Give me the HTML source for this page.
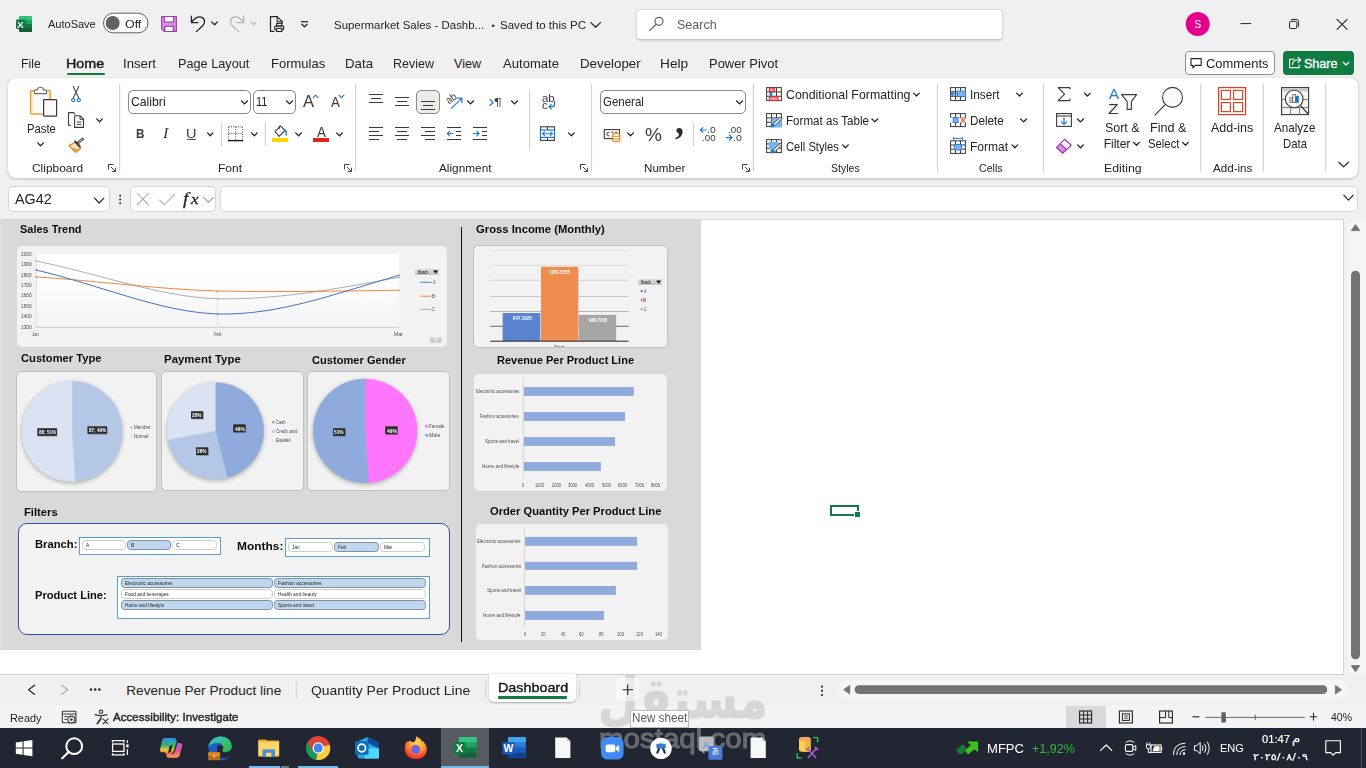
<!DOCTYPE html>
<html lang="en">
<head>
<meta charset="utf-8">
<title>Supermarket Sales - Dashboard - Excel</title>
<style>
*{box-sizing:border-box;margin:0;padding:0}
html,body{width:1366px;height:768px;overflow:hidden;background:#f0f0f0;font-family:"Liberation Sans",sans-serif;color:#242424}
.a{position:absolute}
.t{position:absolute;white-space:nowrap;line-height:1;transform-origin:0 50%;display:block;z-index:2}
svg{position:absolute;overflow:visible}
</style>
</head>
<body>
<div class="a" style="left:0px;top:0px;width:1366px;height:78px;background:#f0f0f0"></div>
<span class="t" style="left:17.35px;top:21px;font-size:8.6px;color:#fff;font-weight:700;transform:scaleX(1.1717);">X</span>
<span class="t" style="left:48.3px;top:18px;font-size:11.7px;color:#242424;transform:scaleX(0.9413);">AutoSave</span>
<span class="t" style="left:125.14px;top:18px;font-size:11.7px;color:#242424;transform:scaleX(1.0592);">Off</span>
<span class="t" style="left:333.68px;top:19px;font-size:11.7px;color:#242424;transform:scaleX(0.9794);">Supermarket Sales - Dashb...</span>
<span class="t" style="left:491.58px;top:22px;font-size:9px;color:#242424;">•</span>
<span class="t" style="left:500.18px;top:19px;font-size:11.7px;color:#242424;transform:scaleX(0.9876);">Saved to this PC</span>
<div class="a" style="left:635.5px;top:8.5px;width:367px;height:31px;background:#fff;border:1px solid #dcdcdc;border-bottom-color:#c4c4c4;border-radius:4px;box-shadow:0 1px 2px rgba(0,0,0,.12)"></div>
<span class="t" style="left:676.74px;top:19px;font-size:12.7px;color:#616161;transform:scaleX(0.9855);">Search</span>
<span class="t" style="left:1194.45px;top:20px;font-size:10px;color:#fff;">S</span>
<span class="t" style="left:21.42px;top:58px;font-size:12.6px;color:#242424;transform:scaleX(0.9694);">File</span>
<span class="t" style="left:123.01px;top:58px;font-size:12.6px;color:#242424;transform:scaleX(1.0472);">Insert</span>
<span class="t" style="left:178.18px;top:58px;font-size:12.6px;color:#242424;transform:scaleX(1.0094);">Page Layout</span>
<span class="t" style="left:270.96px;top:58px;font-size:12.6px;color:#242424;transform:scaleX(1.0334);">Formulas</span>
<span class="t" style="left:344.94px;top:58px;font-size:12.6px;color:#242424;transform:scaleX(1.0530);">Data</span>
<span class="t" style="left:393px;top:58px;font-size:12.6px;color:#242424;transform:scaleX(0.9921);">Review</span>
<span class="t" style="left:454px;top:58px;font-size:12.6px;color:#242424;">View</span>
<span class="t" style="left:503px;top:58px;font-size:12.6px;color:#242424;transform:scaleX(1.0389);">Automate</span>
<span class="t" style="left:579.93px;top:58px;font-size:12.6px;color:#242424;transform:scaleX(1.0576);">Developer</span>
<span class="t" style="left:659.9px;top:58px;font-size:12.6px;color:#242424;transform:scaleX(1.0869);">Help</span>
<span class="t" style="left:708.96px;top:58px;font-size:12.6px;color:#242424;transform:scaleX(1.0270);">Power Pivot</span>
<span class="t" style="left:66.26px;top:58px;font-size:12.2px;color:#1a1a1a;transform:scaleX(1.1723);-webkit-text-stroke:.4px #1a1a1a;">Home</span>
<div class="a" style="left:66.8px;top:72.8px;width:38px;height:2.2px;background:#107c41;border-radius:1px"></div>
<div class="a" style="left:1185px;top:51px;width:90px;height:24px;background:#fff;border:1px solid #8f8f8f;border-radius:4px"></div>
<span class="t" style="left:1205.85px;top:58px;font-size:12.6px;color:#242424;transform:scaleX(1.0276);">Comments</span>
<div class="a" style="left:1283px;top:51px;width:71px;height:24px;background:#107c41;border-radius:4px"></div>
<span class="t" style="left:1303.93px;top:58px;font-size:12.6px;color:#fff;-webkit-text-stroke:.3px #fff;">Share</span>
<svg class="a" style="left:0;top:0" width="1366" height="768" viewBox="0 0 1366 768"><rect x="19" y="16" width="13" height="16" fill="#21a366" stroke="none" stroke-width="1" rx="1" />
<rect x="19" y="16" width="13" height="4" fill="#33c481" stroke="none" stroke-width="1" rx="1" />
<rect x="19" y="24" width="13" height="4" fill="#107c41" stroke="none" stroke-width="1" rx="0" />
<rect x="19" y="28" width="13" height="4" fill="#185c37" stroke="none" stroke-width="1" rx="1" />
<rect x="25.5" y="16" width="0.8" height="16" fill="#0e6b38" stroke="none" stroke-width="1" rx="0" opacity=".35"/>
<rect x="16" y="19.5" width="9.5" height="9.5" fill="#107c41" stroke="none" stroke-width="1" rx="1" />
<rect x="18.5" y="28" width="7" height="1.6" fill="#0b5a2e" stroke="none" stroke-width="1" rx="0" opacity=".6"/>
<rect x="103.5" y="13.2" width="44.5" height="19.6" fill="#fff" stroke="#616161" stroke-width="1" rx="9.8" />
<circle cx="112.7" cy="23" r="7" fill="#616161" stroke="none" stroke-width="1" />
<path d="M161.6 16.6H176.4V31.4H164.2L161.6 28.8Z" stroke="#9a3fae" fill="#d490de" stroke-width="1.1" stroke-linejoin="round"/>
<rect x="164.9" y="17.1" width="8.2" height="4.4" fill="#fff" stroke="none" stroke-width="1" rx="0" />
<rect x="165.8" y="26.8" width="6.6" height="4.2" fill="#fff" stroke="none" stroke-width="1" rx="0" />
<path d="M164.4 31.2V26.3H173.6V31.2M164.4 17V22H173.6V17" stroke="#9a3fae" fill="none" stroke-width="1" />
<path d="M191.4 16.2V22.6H197.8" stroke="#242424" fill="none" stroke-width="1.3" stroke-linecap="round" stroke-linejoin="round"/>
<path d="M191.8 22.2C194 18.4 198.6 15.4 202.4 17.6C205.4 19.4 205 23.4 202.6 25.8L196.4 31.6" stroke="#242424" fill="none" stroke-width="1.3" stroke-linecap="round" stroke-linejoin="round"/>
<path d="M211.7 21.9L214.55 24.8L217.4 21.9" stroke="#242424" stroke-width="1.3" fill="none" stroke-linecap="round" stroke-linejoin="round"/>
<path d="M243.6 16.2V22.6H237.2" stroke="#b4b4b4" fill="none" stroke-width="1.3" stroke-linecap="round" stroke-linejoin="round"/>
<path d="M243.2 22.2C241 18.4 236.4 15.4 232.6 17.6C229.6 19.4 230 23.4 232.4 25.8L238.6 31.6" stroke="#b4b4b4" fill="none" stroke-width="1.3" stroke-linecap="round" stroke-linejoin="round"/>
<path d="M250.9 21.9L253.6 24.8L256.3 21.9" stroke="#bdbdbd" stroke-width="1.3" fill="none" stroke-linecap="round" stroke-linejoin="round"/>
<path d="M274.4 31.4H270.5V16.6H277.2L282.4 21.8V23.6" stroke="#242424" fill="none" stroke-width="1.2" stroke-linejoin="round"/>
<path d="M277.2 16.8V21.8H282.2" stroke="#242424" fill="none" stroke-width="1.1" stroke-linejoin="round"/>
<rect x="274.8" y="26" width="8.8" height="3.8" fill="none" stroke="#242424" stroke-width="1.1" rx="0.6" />
<rect x="276.6" y="23.4" width="5.2" height="2.6" fill="none" stroke="#242424" stroke-width="1.1" rx="0" />
<rect x="276.6" y="28.4" width="5.2" height="3.1" fill="#f0f0f0" stroke="#242424" stroke-width="1.1" rx="0" />
<path d="M301 21.7L308 21.7" stroke="#242424" stroke-width="1.2" fill="none" />
<path d="M301.9 24.3L304.5 26.8L307.1 24.3" stroke="#242424" stroke-width="1.3" fill="none" stroke-linecap="round" stroke-linejoin="round"/>
<path d="M590.9 22.6L595.65 27.2L600.4 22.6" stroke="#242424" stroke-width="1.2" fill="none" stroke-linecap="round" stroke-linejoin="round"/>
<circle cx="659" cy="21.3" r="4" fill="none" stroke="#616161" stroke-width="1.2" />
<path d="M656.2 24.3L649.5 30.6" stroke="#616161" stroke-width="1.2" fill="none" stroke-linecap="round"/>
<circle cx="1197.7" cy="24" r="12" fill="#e3008c" stroke="none" stroke-width="1" />
<path d="M1240.5 23.6L1251.2 23.6" stroke="#242424" stroke-width="1" fill="none" />
<rect x="1289.5" y="21.3" width="7.3" height="7.3" fill="none" stroke="#242424" stroke-width="1" rx="1.6" />
<path d="M1291.6 19.4H1296.2Q1298.6 19.4 1298.6 21.8V26.6" stroke="#242424" fill="none" stroke-width="1" stroke-linecap="round"/>
<path d="M1336.8 19.2L1347.4 29.6M1347.4 19.2L1336.8 29.6" stroke="#242424" fill="none" stroke-width="1.1" />
<path d="M1191 58.6H1201.2V65.4H1195.2L1192.9 67.8V65.4H1191Z" stroke="#242424" fill="none" stroke-width="1.1" stroke-linejoin="round"/>
<path d="M1294.2 59.2H1289.6V67.6H1299.2V65" stroke="#fff" fill="none" stroke-width="1.1" stroke-linejoin="round" stroke-linecap="round"/>
<path d="M1292.4 64.6C1292.8 61.6 1294.8 60 1297.4 60H1300.4M1298 57.4L1300.7 60L1298 62.6" stroke="#fff" fill="none" stroke-width="1.1" stroke-linejoin="round" stroke-linecap="round"/>
<path d="M1343.2 62.2L1346 65L1348.8 62.2" stroke="#fff" stroke-width="1.3" fill="none" stroke-linecap="round" stroke-linejoin="round"/></svg>
<div class="a" style="left:8px;top:78px;width:1350px;height:100px;background:#fff;border-radius:8px;box-shadow:0 1px 3px rgba(0,0,0,.20),0 0 1px rgba(0,0,0,.10)"></div>
<span class="t" style="left:26.6px;top:124px;font-size:11.9px;color:#242424;transform:scaleX(0.9490);">Paste</span>
<span class="t" style="left:32.15px;top:162px;font-size:11.7px;color:#242424;transform:scaleX(1.0207);">Clipboard</span>
<div class="a" style="left:128.2px;top:90px;width:122.6px;height:24px;border:1px solid #8a8a8a;border-radius:5px;background:#fff"></div>
<span class="t" style="left:130.89px;top:96px;font-size:12.7px;color:#242424;transform:scaleX(0.9629);">Calibri</span>
<div class="a" style="left:253.4px;top:90px;width:42.6px;height:24px;border:1px solid #8a8a8a;border-radius:5px;background:#fff"></div>
<span class="t" style="left:256.08px;top:96px;font-size:12.7px;color:#242424;transform:scaleX(0.8605);">11</span>
<span class="t" style="left:303px;top:93px;font-size:17.2px;color:#3b3b3b;transform:scaleX(0.9617);">A</span>
<span class="t" style="left:330.6px;top:96px;font-size:13.8px;color:#3b3b3b;transform:scaleX(0.9589);">A</span>
<span class="t" style="left:136.14px;top:127px;font-size:13px;color:#3b3b3b;font-weight:700;transform:scaleX(0.9006);">B</span>
<span class="t" style="left:163.18px;top:126px;font-size:14.4px;color:#3b3b3b;font-style:italic;font-family:'Liberation Serif',serif;transform:scaleX(1.1330);">I</span>
<span class="t" style="left:186.31px;top:128px;font-size:12.6px;color:#3b3b3b;transform:scaleX(1.1557);">U</span>
<span class="t" style="left:316.9px;top:125px;font-size:14.2px;color:#3b3b3b;transform:scaleX(0.9531);">A</span>
<span class="t" style="left:217.79px;top:162px;font-size:11.7px;color:#242424;transform:scaleX(1.0283);">Font</span>
<div class="a" style="left:416.2px;top:90px;width:23.4px;height:24px;background:#ebebeb;border:1px solid #8a8a8a;border-radius:5px"></div>
<span class="t" style="left:444.6px;top:92.6px;font-size:10.6px;color:#3b3b3b;transform:rotate(-38deg) scaleX(.92);transform-origin:50% 50%">ab</span>
<span class="t" style="left:494.28px;top:98px;font-size:10.4px;color:#3b3b3b;transform:scaleX(1.4214);">¶</span>
<span class="t" style="left:541.94px;top:94px;font-size:10.4px;color:#3b3b3b;transform:scaleX(1.1016);">ab</span>
<span class="t" style="left:541.94px;top:101px;font-size:10.4px;color:#3b3b3b;transform:scaleX(1.1052);">c</span>
<span class="t" style="left:439.4px;top:162px;font-size:11.7px;color:#242424;transform:scaleX(1.0095);">Alignment</span>
<div class="a" style="left:600.2px;top:90px;width:145.4px;height:24px;border:1px solid #8a8a8a;border-radius:5px;background:#fff"></div>
<span class="t" style="left:602.93px;top:96px;font-size:12.7px;color:#242424;transform:scaleX(0.9051);">General</span>
<span class="t" style="left:644.53px;top:126px;font-size:18.6px;color:#3b3b3b;transform:scaleX(1.0228);">%</span>
<span class="t" style="left:675.34px;top:102px;font-size:38px;color:#2b2b2b;font-weight:700;font-family:'Liberation Serif',serif;transform:scaleX(0.9499);">,</span>
<span class="t" style="left:706.66px;top:126px;font-size:8.8px;color:#3b3b3b;transform:scaleX(1.1844);">.0</span>
<span class="t" style="left:701.72px;top:134px;font-size:8.8px;color:#3b3b3b;transform:scaleX(1.1139);">.00</span>
<span class="t" style="left:727.72px;top:126px;font-size:8.8px;color:#3b3b3b;transform:scaleX(1.1139);">.00</span>
<span class="t" style="left:732.66px;top:134px;font-size:8.8px;color:#3b3b3b;transform:scaleX(1.1844);">.0</span>
<span class="t" style="left:643.82px;top:162px;font-size:11.7px;color:#242424;transform:scaleX(0.9941);">Number</span>
<span class="t" style="left:785.88px;top:90px;font-size:11.9px;color:#242424;transform:scaleX(1.0405);">Conditional Formatting</span>
<span class="t" style="left:785.57px;top:116px;font-size:11.9px;color:#242424;transform:scaleX(0.9754);">Format as Table</span>
<span class="t" style="left:785.94px;top:142px;font-size:11.9px;color:#242424;transform:scaleX(0.9418);">Cell Styles</span>
<span class="t" style="left:831.03px;top:162px;font-size:11.7px;color:#242424;transform:scaleX(0.9016);">Styles</span>
<span class="t" style="left:969.54px;top:90px;font-size:11.9px;color:#242424;transform:scaleX(0.9903);">Insert</span>
<span class="t" style="left:969.66px;top:116px;font-size:11.9px;color:#242424;transform:scaleX(0.9860);">Delete</span>
<span class="t" style="left:969.64px;top:142px;font-size:11.9px;color:#242424;transform:scaleX(1.0133);">Format</span>
<span class="t" style="left:979.22px;top:162px;font-size:11.7px;color:#242424;transform:scaleX(0.9086);">Cells</span>
<span class="t" style="left:1108.8px;top:87px;font-size:14.6px;color:#1f7ad8;transform:scaleX(1.0300);">A</span>
<span class="t" style="left:1108.28px;top:102px;font-size:14.6px;color:#3b3b3b;transform:scaleX(1.1955);">Z</span>
<span class="t" style="left:1105.44px;top:123px;font-size:11.9px;color:#242424;transform:scaleX(1.0427);">Sort &amp;</span>
<span class="t" style="left:1103.8px;top:139px;font-size:11.9px;color:#242424;">Filter</span>
<span class="t" style="left:1150.49px;top:123px;font-size:11.9px;color:#242424;transform:scaleX(1.0624);">Find &amp;</span>
<span class="t" style="left:1147.59px;top:139px;font-size:11.9px;color:#242424;transform:scaleX(0.9511);">Select</span>
<span class="t" style="left:1103.77px;top:162px;font-size:11.7px;color:#242424;transform:scaleX(1.0512);">Editing</span>
<span class="t" style="left:1211.25px;top:123px;font-size:11.9px;color:#242424;transform:scaleX(1.0482);">Add-ins</span>
<span class="t" style="left:1212.5px;top:162px;font-size:11.7px;color:#242424;transform:scaleX(0.9935);">Add-ins</span>
<span class="t" style="left:1274.1px;top:123px;font-size:11.9px;color:#242424;transform:scaleX(0.9778);">Analyze</span>
<span class="t" style="left:1282.59px;top:139px;font-size:11.9px;color:#242424;transform:scaleX(0.9539);">Data</span>
<svg class="a" style="left:0;top:0" width="1366" height="768" viewBox="0 0 1366 768"><path d="M119.6 83.5L119.6 171.5" stroke="#d4d4d4" stroke-width="1.2" fill="none" />
<path d="M355.6 83.5L355.6 171.5" stroke="#d4d4d4" stroke-width="1.2" fill="none" />
<path d="M591.5 83.5L591.5 171.5" stroke="#d4d4d4" stroke-width="1.2" fill="none" />
<path d="M753.4 83.5L753.4 171.5" stroke="#d4d4d4" stroke-width="1.2" fill="none" />
<path d="M937.5 83.5L937.5 171.5" stroke="#d4d4d4" stroke-width="1.2" fill="none" />
<path d="M1043.4 83.5L1043.4 171.5" stroke="#d4d4d4" stroke-width="1.2" fill="none" />
<path d="M1200.7 83.5L1200.7 171.5" stroke="#d4d4d4" stroke-width="1.2" fill="none" />
<path d="M1263.4 83.5L1263.4 171.5" stroke="#d4d4d4" stroke-width="1.2" fill="none" />
<path d="M1325.6 83.5L1325.6 171.5" stroke="#d4d4d4" stroke-width="1.2" fill="none" />
<path d="M529.6 89L529.6 151" stroke="#d4d4d4" stroke-width="1.2" fill="none" />
<path d="M221.5 122L221.5 146" stroke="#d4d4d4" stroke-width="1.2" fill="none" />
<path d="M265.4 122L265.4 146" stroke="#d4d4d4" stroke-width="1.2" fill="none" />
<path d="M693.4 122L693.4 146" stroke="#d4d4d4" stroke-width="1.2" fill="none" />
<rect x="30.6" y="90.6" width="19.8" height="23.6" fill="#fbe7c6" stroke="#ef9b25" stroke-width="1.3" rx="0.8" />
<rect x="33.2" y="92.4" width="14.6" height="20.6" fill="#fafafa" stroke="none" stroke-width="1" rx="0" />
<path d="M34.4 93.6V90.9Q34.4 89.9 35.4 89.9H37.4Q37.6 87.2 40.4 87.2Q43.2 87.2 43.4 89.9H45.4Q46.4 89.9 46.4 90.9V93.6Z" stroke="#6e6e6e" fill="#fff" stroke-width="1.1" stroke-linejoin="round"/>
<rect x="43.6" y="99.6" width="13" height="16.6" fill="#fafafa" stroke="#3b3b3b" stroke-width="1.2" rx="0.6" />
<path d="M37.7 142.9L40.55 145.8L43.4 142.9" stroke="#242424" stroke-width="1.3" fill="none" stroke-linecap="round" stroke-linejoin="round"/>
<path d="M73.2 86.6L78.9 98.2M78.8 86.6L73.1 98.2" stroke="#4a4a4a" fill="none" stroke-width="1.1" stroke-linecap="round"/>
<circle cx="73.2" cy="100.2" r="1.55" fill="none" stroke="#1f7ad8" stroke-width="1.2" />
<circle cx="78.8" cy="100.2" r="1.55" fill="none" stroke="#1f7ad8" stroke-width="1.2" />
<path d="M71.2 125.2H68.5V112.6H73.6L75.4 114.4" stroke="#3b3b3b" fill="none" stroke-width="1.1" stroke-linejoin="round"/>
<path d="M74.6 115.8H80.2L83.5 119.1V127.4H74.6Z" stroke="#3b3b3b" fill="#fff" stroke-width="1.1" stroke-linejoin="round"/>
<path d="M80 116V119.3H83.3" stroke="#3b3b3b" fill="none" stroke-width="1" />
<path d="M76.8 122L81.4 122" stroke="#3b3b3b" stroke-width="1" fill="none" />
<path d="M76.8 124.4L81.4 124.4" stroke="#3b3b3b" stroke-width="1" fill="none" />
<path d="M96.7 118.9L99.55 121.8L102.4 118.9" stroke="#242424" stroke-width="1.3" fill="none" stroke-linecap="round" stroke-linejoin="round"/>
<path d="M69 145.6L75.4 142.2L81 148L75.6 152.4Z" stroke="#e8811a" fill="#fde2bd" stroke-width="1.2" stroke-linejoin="round"/>
<path d="M72.6 148.4L75.6 152.2L78.4 150Z" stroke="#e8811a" fill="#f6a94a" stroke-width="0.6" />
<path d="M75.2 141.6L79.6 146.2" stroke="#3b3b3b" fill="none" stroke-width="2.2" stroke-linecap="round"/>
<path d="M78.4 142.4L82.6 138.9" stroke="#3b3b3b" fill="none" stroke-width="2.6" stroke-linecap="round"/>
<path d="M78.6 142.3L82.4 139.1" stroke="#fff" fill="none" stroke-width="0.9" stroke-linecap="round"/>
<path d="M113.5 164.5H108.5V169.5" stroke="#444" fill="none" stroke-width="1" />
<path d="M111 167L115.3 171.3M115.5 167.8V171.5H111.8" stroke="#444" fill="none" stroke-width="1" />
<path d="M241.6 101L244.5 103.9L247.4 101" stroke="#242424" stroke-width="1.3" fill="none" stroke-linecap="round" stroke-linejoin="round"/>
<path d="M286.6 101L289.5 103.9L292.4 101" stroke="#242424" stroke-width="1.3" fill="none" stroke-linecap="round" stroke-linejoin="round"/>
<path d="M313.2 97.6L315.6 95.2L318 97.6" stroke="#1f7ad8" stroke-width="1.2" fill="none" stroke-linecap="round" stroke-linejoin="round"/>
<path d="M339.1 95.2L341.5 97.6L343.9 95.2" stroke="#1f7ad8" stroke-width="1.2" fill="none" stroke-linecap="round" stroke-linejoin="round"/>
<path d="M187.2 139.4L195.8 139.4" stroke="#3b3b3b" stroke-width="1" fill="none" />
<path d="M207.6 132.9L210.25 135.8L212.9 132.9" stroke="#242424" stroke-width="1.3" fill="none" stroke-linecap="round" stroke-linejoin="round"/>
<path d="M228.6 126.8H242.6M228.6 126.8V139.6M242.6 126.8V139.6M235.6 126.8V139.6M228.6 133.4H242.6" stroke="#3b3b3b" fill="none" stroke-width="1" stroke-dasharray="1 1.4"/>
<path d="M228 140.6L243.2 140.6" stroke="#1a1a1a" stroke-width="1.4" fill="none" />
<path d="M251.6 132.9L254.4 135.8L257.2 132.9" stroke="#242424" stroke-width="1.3" fill="none" stroke-linecap="round" stroke-linejoin="round"/>
<rect x="272" y="138" width="16" height="4" fill="#ffd500" stroke="none" stroke-width="1" rx="0" />
<path d="M275 131.6L279.6 126.9Q280.6 126 281.6 126.9L285 130.6L279.2 136.4Z" stroke="#3b3b3b" fill="#fff" stroke-width="1.1" stroke-linejoin="round"/>
<path d="M279.4 128.8V126.4Q279.4 125.4 280.6 125.6" stroke="#3b3b3b" fill="none" stroke-width="1" />
<path d="M284.2 129.4Q286.8 130.6 286.2 135" stroke="#1f7ad8" fill="none" stroke-width="1.5" stroke-linecap="round"/>
<path d="M295.7 132.9L298.55 135.8L301.4 132.9" stroke="#242424" stroke-width="1.3" fill="none" stroke-linecap="round" stroke-linejoin="round"/>
<rect x="313" y="138" width="16" height="4" fill="#e3241b" stroke="none" stroke-width="1" rx="0" />
<path d="M336.6 132.9L339.5 135.8L342.4 132.9" stroke="#242424" stroke-width="1.3" fill="none" stroke-linecap="round" stroke-linejoin="round"/>
<path d="M349.5 164.5H344.5V169.5" stroke="#444" fill="none" stroke-width="1" />
<path d="M347 167L351.3 171.3M351.5 167.8V171.5H347.8" stroke="#444" fill="none" stroke-width="1" />
<path d="M369 94.5L383 94.5" stroke="#3b3b3b" stroke-width="1" fill="none" />
<path d="M371 98.5L381 98.5" stroke="#3b3b3b" stroke-width="1" fill="none" />
<path d="M369 102.5L383 102.5" stroke="#3b3b3b" stroke-width="1" fill="none" />
<path d="M395 97.5L409 97.5" stroke="#3b3b3b" stroke-width="1" fill="none" />
<path d="M397 101.5L407 101.5" stroke="#3b3b3b" stroke-width="1" fill="none" />
<path d="M395 105.5L409 105.5" stroke="#3b3b3b" stroke-width="1" fill="none" />
<path d="M421 101.5L435 101.5" stroke="#3b3b3b" stroke-width="1" fill="none" />
<path d="M423 105.5L433 105.5" stroke="#3b3b3b" stroke-width="1" fill="none" />
<path d="M421 109.5L435 109.5" stroke="#3b3b3b" stroke-width="1" fill="none" />
<path d="M369 127.5L383 127.5" stroke="#3b3b3b" stroke-width="1" fill="none" />
<path d="M369 131.5L379 131.5" stroke="#3b3b3b" stroke-width="1" fill="none" />
<path d="M369 135.5L383 135.5" stroke="#3b3b3b" stroke-width="1" fill="none" />
<path d="M369 139.5L379 139.5" stroke="#3b3b3b" stroke-width="1" fill="none" />
<path d="M395 127.5L409 127.5" stroke="#3b3b3b" stroke-width="1" fill="none" />
<path d="M397 131.5L407 131.5" stroke="#3b3b3b" stroke-width="1" fill="none" />
<path d="M395 135.5L409 135.5" stroke="#3b3b3b" stroke-width="1" fill="none" />
<path d="M397 139.5L407 139.5" stroke="#3b3b3b" stroke-width="1" fill="none" />
<path d="M421 127.5L435 127.5" stroke="#3b3b3b" stroke-width="1" fill="none" />
<path d="M425 131.5L435 131.5" stroke="#3b3b3b" stroke-width="1" fill="none" />
<path d="M421 135.5L435 135.5" stroke="#3b3b3b" stroke-width="1" fill="none" />
<path d="M425 139.5L435 139.5" stroke="#3b3b3b" stroke-width="1" fill="none" />
<path d="M447 127.5L461 127.5" stroke="#3b3b3b" stroke-width="1" fill="none" />
<path d="M456 131.5L461 131.5" stroke="#3b3b3b" stroke-width="1" fill="none" />
<path d="M456 135.5L461 135.5" stroke="#3b3b3b" stroke-width="1" fill="none" />
<path d="M447 139.5L461 139.5" stroke="#3b3b3b" stroke-width="1" fill="none" />
<path d="M453 133.5H447.4M449.6 131.2L447.3 133.5L449.6 135.8" stroke="#1f7ad8" fill="none" stroke-width="1.2" stroke-linecap="round" stroke-linejoin="round"/>
<path d="M473 127.5L487 127.5" stroke="#3b3b3b" stroke-width="1" fill="none" />
<path d="M482 131.5L487 131.5" stroke="#3b3b3b" stroke-width="1" fill="none" />
<path d="M482 135.5L487 135.5" stroke="#3b3b3b" stroke-width="1" fill="none" />
<path d="M473 139.5L487 139.5" stroke="#3b3b3b" stroke-width="1" fill="none" />
<path d="M473.4 133.5H479M476.8 131.2L479.1 133.5L476.8 135.8" stroke="#1f7ad8" fill="none" stroke-width="1.2" stroke-linecap="round" stroke-linejoin="round"/>
<path d="M451.4 108.4L461.6 98.6M457.6 98.2H461.9V102.6" stroke="#1f7ad8" fill="none" stroke-width="1.2" stroke-linecap="round" stroke-linejoin="round"/>
<path d="M467.6 101L470.5 103.9L473.4 101" stroke="#242424" stroke-width="1.3" fill="none" stroke-linecap="round" stroke-linejoin="round"/>
<path d="M490 99.6L493.2 102.4L490 105.2" stroke="#1f7ad8" fill="none" stroke-width="1.3" stroke-linecap="round" stroke-linejoin="round"/>
<path d="M511.6 101L514.5 103.9L517.4 101" stroke="#242424" stroke-width="1.3" fill="none" stroke-linecap="round" stroke-linejoin="round"/>
<path d="M554.6 101.4V104.2Q554.6 106.6 552.2 106.6H549.2M551.4 104.3L549 106.6L551.4 108.9" stroke="#1f7ad8" fill="none" stroke-width="1.2" stroke-linecap="round" stroke-linejoin="round"/>
<rect x="540.5" y="126.8" width="14" height="13.6" fill="none" stroke="#3b3b3b" stroke-width="1.1" rx="0" />
<path d="M547.5 126.8L547.5 140.4" stroke="#3b3b3b" stroke-width="1" fill="none" />
<rect x="540.5" y="130" width="14" height="7.4" fill="#fff" stroke="#1f7ad8" stroke-width="1.2" rx="0" />
<path d="M542.6 133.7H552.4M544.6 131.8L542.5 133.7L544.6 135.6M550.4 131.8L552.5 133.7L550.4 135.6" stroke="#1f7ad8" fill="none" stroke-width="1.1" stroke-linecap="round" stroke-linejoin="round"/>
<path d="M568.5 132.9L571.4 135.8L574.3 132.9" stroke="#242424" stroke-width="1.3" fill="none" stroke-linecap="round" stroke-linejoin="round"/>
<path d="M585.5 164.5H580.5V169.5" stroke="#444" fill="none" stroke-width="1" />
<path d="M583 167L587.3 171.3M587.5 167.8V171.5H583.8" stroke="#444" fill="none" stroke-width="1" />
<path d="M736.6 101L739.5 103.9L742.4 101" stroke="#242424" stroke-width="1.3" fill="none" stroke-linecap="round" stroke-linejoin="round"/>
<rect x="604.3" y="129.6" width="15.2" height="9" fill="#fff" stroke="#3b3b3b" stroke-width="1.1" rx="0" />
<path d="M609.4 132.4Q606.8 131.6 606.8 134Q606.8 136.4 609.4 135.8M611.4 132.2H613.6M615.2 132.2H617.2" stroke="#3b3b3b" fill="none" stroke-width="1" />
<path d="M612.6 134.8V140.2Q612.6 141.7 616.2 141.7Q619.8 141.7 619.8 140.2V134.8Q619.8 133.3 616.2 133.3Q612.6 133.3 612.6 134.8Z" stroke="#e8811a" fill="#fff" stroke-width="1.1" />
<path d="M612.6 135Q612.6 136.5 616.2 136.5Q619.8 136.5 619.8 135M612.6 137.7Q612.6 139.2 616.2 139.2Q619.8 139.2 619.8 137.7" stroke="#e8811a" fill="none" stroke-width="1" />
<path d="M627.6 132.9L630.5 135.8L633.4 132.9" stroke="#242424" stroke-width="1.3" fill="none" stroke-linecap="round" stroke-linejoin="round"/>
<path d="M706.2 130H700.4M702.8 127.6L700.3 130L702.8 132.4" stroke="#1f7ad8" fill="none" stroke-width="1.2" stroke-linecap="round" stroke-linejoin="round"/>
<path d="M726.2 137.6H732M729.6 135.2L732.1 137.6L729.6 140" stroke="#1f7ad8" fill="none" stroke-width="1.2" stroke-linecap="round" stroke-linejoin="round"/>
<path d="M747.5 164.5H742.5V169.5" stroke="#444" fill="none" stroke-width="1" />
<path d="M745 167L749.3 171.3M749.5 167.8V171.5H745.8" stroke="#444" fill="none" stroke-width="1" />
<rect x="766.6" y="87.6" width="14.8" height="13" fill="#fff" stroke="#3b3b3b" stroke-width="1" rx="0" />
<path d="M771.53 87.6L771.53 100.6" stroke="#3b3b3b" stroke-width="1" fill="none" />
<path d="M776.47 87.6L776.47 100.6" stroke="#3b3b3b" stroke-width="1" fill="none" />
<path d="M766.6 91.93L781.4 91.93" stroke="#3b3b3b" stroke-width="1" fill="none" />
<path d="M766.6 96.27L781.4 96.27" stroke="#3b3b3b" stroke-width="1" fill="none" />
<rect x="769.4" y="88" width="5" height="3.6" fill="#f2a0a0" stroke="#e3241b" stroke-width="1" rx="0" />
<rect x="769.4" y="96.8" width="8.6" height="3.6" fill="#f2a0a0" stroke="#e3241b" stroke-width="1" rx="0" />
<rect x="769.6" y="92" width="2.6" height="4.6" fill="#1f7ad8" stroke="none" stroke-width="1" rx="0" />
<path d="M913.6 93.1L916.45 96L919.3 93.1" stroke="#242424" stroke-width="1.3" fill="none" stroke-linecap="round" stroke-linejoin="round"/>
<rect x="766.6" y="113.6" width="14.8" height="13" fill="#fff" stroke="#3b3b3b" stroke-width="1" rx="0" />
<path d="M771.53 113.6L771.53 126.6" stroke="#3b3b3b" stroke-width="1" fill="none" />
<path d="M776.47 113.6L776.47 126.6" stroke="#3b3b3b" stroke-width="1" fill="none" />
<path d="M766.6 117.93L781.4 117.93" stroke="#3b3b3b" stroke-width="1" fill="none" />
<path d="M766.6 122.27L781.4 122.27" stroke="#3b3b3b" stroke-width="1" fill="none" />
<rect x="771.6" y="118" width="10.2" height="9.4" fill="#7ab4ee" stroke="none" stroke-width="1" rx="0" />
<path d="M770.4 126.6Q771.6 124.4 773.6 123.4L780.4 117.2L781.8 118.6L775.4 125.2Q774 127.2 770.4 126.6Z" stroke="#3b3b3b" fill="#fff" stroke-width="0.9" stroke-linejoin="round"/>
<path d="M770 126.8Q771.2 124.6 773.2 123.6L775.2 125.6Q773.6 127.4 770 126.8Z" stroke="#1f7ad8" fill="#1f7ad8" stroke-width="0.5" />
<path d="M872 119L874.85 121.9L877.7 119" stroke="#242424" stroke-width="1.3" fill="none" stroke-linecap="round" stroke-linejoin="round"/>
<rect x="766.6" y="139.6" width="14.8" height="13" fill="#fff" stroke="#3b3b3b" stroke-width="1" rx="0" />
<path d="M771.53 139.6L771.53 152.6" stroke="#3b3b3b" stroke-width="1" fill="none" />
<path d="M776.47 139.6L776.47 152.6" stroke="#3b3b3b" stroke-width="1" fill="none" />
<path d="M766.6 143.93L781.4 143.93" stroke="#3b3b3b" stroke-width="1" fill="none" />
<path d="M766.6 148.27L781.4 148.27" stroke="#3b3b3b" stroke-width="1" fill="none" />
<rect x="768.8" y="141.8" width="9.6" height="7.8" fill="#7ab4ee" stroke="none" stroke-width="1" rx="0" />
<path d="M770.4 152.6Q771.6 150.4 773.6 149.4L780.4 143.2L781.8 144.6L775.4 151.2Q774 153.2 770.4 152.6Z" stroke="#3b3b3b" fill="#fff" stroke-width="0.9" stroke-linejoin="round"/>
<path d="M770 152.8Q771.2 150.6 773.2 149.6L775.2 151.6Q773.6 153.4 770 152.8Z" stroke="#1f7ad8" fill="#1f7ad8" stroke-width="0.5" />
<path d="M842.6 144.9L845.45 147.8L848.3 144.9" stroke="#242424" stroke-width="1.3" fill="none" stroke-linecap="round" stroke-linejoin="round"/>
<rect x="950.6" y="87.6" width="14.8" height="13" fill="#fff" stroke="#3b3b3b" stroke-width="1" rx="0" />
<path d="M955.53 87.6L955.53 100.6" stroke="#3b3b3b" stroke-width="1" fill="none" />
<path d="M960.47 87.6L960.47 100.6" stroke="#3b3b3b" stroke-width="1" fill="none" />
<path d="M950.6 91.93L965.4 91.93" stroke="#3b3b3b" stroke-width="1" fill="none" />
<path d="M950.6 96.27L965.4 96.27" stroke="#3b3b3b" stroke-width="1" fill="none" />
<rect x="957.6" y="91" width="8" height="5.4" fill="#7ab4ee" stroke="#1f7ad8" stroke-width="0.8" rx="0" />
<path d="M958 93.8H951M953.6 91.2L950.9 93.8L953.6 96.4" stroke="#1f7ad8" fill="none" stroke-width="1.2" stroke-linecap="round" stroke-linejoin="round"/>
<path d="M1016.6 93.1L1019.5 96L1022.4 93.1" stroke="#242424" stroke-width="1.3" fill="none" stroke-linecap="round" stroke-linejoin="round"/>
<rect x="950.6" y="113.6" width="14.8" height="13" fill="#fff" stroke="#3b3b3b" stroke-width="1" rx="0" />
<path d="M955.53 113.6L955.53 126.6" stroke="#3b3b3b" stroke-width="1" fill="none" />
<path d="M960.47 113.6L960.47 126.6" stroke="#3b3b3b" stroke-width="1" fill="none" />
<path d="M950.6 117.93L965.4 117.93" stroke="#3b3b3b" stroke-width="1" fill="none" />
<path d="M950.6 122.27L965.4 122.27" stroke="#3b3b3b" stroke-width="1" fill="none" />
<rect x="950" y="117.6" width="16" height="5.2" fill="#fff" stroke="none" stroke-width="1" rx="0" />
<rect x="953.2" y="117.8" width="4.8" height="4.8" fill="#7ab4ee" stroke="#1f7ad8" stroke-width="0.9" rx="0" />
<path d="M960.8 117.8L965.4 122.6M965.4 117.8L960.8 122.6" stroke="#f0501e" fill="none" stroke-width="1.1" />
<path d="M1020.7 119L1023.55 121.9L1026.4 119" stroke="#242424" stroke-width="1.3" fill="none" stroke-linecap="round" stroke-linejoin="round"/>
<rect x="950.6" y="140.8" width="14.8" height="12.6" fill="#fff" stroke="#3b3b3b" stroke-width="1" rx="0" />
<path d="M955.53 140.8L955.53 153.4" stroke="#3b3b3b" stroke-width="1" fill="none" />
<path d="M960.47 140.8L960.47 153.4" stroke="#3b3b3b" stroke-width="1" fill="none" />
<path d="M950.6 145L965.4 145" stroke="#3b3b3b" stroke-width="1" fill="none" />
<path d="M950.6 149.2L965.4 149.2" stroke="#3b3b3b" stroke-width="1" fill="none" />
<rect x="954.6" y="144.6" width="6.8" height="5.4" fill="#7ab4ee" stroke="#1f7ad8" stroke-width="0.9" rx="0" />
<path d="M953.4 138.4H962.6M953.4 137V139.8M962.6 137V139.8" stroke="#1f7ad8" fill="none" stroke-width="1" />
<path d="M1012 144.9L1014.85 147.8L1017.7 144.9" stroke="#242424" stroke-width="1.3" fill="none" stroke-linecap="round" stroke-linejoin="round"/>
<path d="M1070 89.6V87.6H1058.2L1064.6 94.2L1058.2 100.6H1070V98.6" stroke="#3b3b3b" fill="none" stroke-width="1.1" stroke-linejoin="round"/>
<path d="M1084.5 93.1L1087.35 96L1090.2 93.1" stroke="#242424" stroke-width="1.3" fill="none" stroke-linecap="round" stroke-linejoin="round"/>
<rect x="1056.6" y="113.6" width="14.8" height="12.8" fill="#fff" stroke="#3b3b3b" stroke-width="1.1" rx="0" />
<path d="M1056.6 116L1071.4 116" stroke="#3b3b3b" stroke-width="1" fill="none" />
<path d="M1064 117.8V124.2M1061.6 121.8L1064 124.3L1066.4 121.8" stroke="#1f7ad8" fill="none" stroke-width="1.2" stroke-linecap="round" stroke-linejoin="round"/>
<path d="M1077.6 119L1080.5 121.9L1083.4 119" stroke="#242424" stroke-width="1.3" fill="none" stroke-linecap="round" stroke-linejoin="round"/>
<path d="M1056.6 147.6L1064.8 139.2L1071.2 145.2L1062.6 153Z" stroke="#a23bb5" fill="#fff" stroke-width="1.2" stroke-linejoin="round"/>
<path d="M1056.6 147.6L1060.6 143.6L1066.4 149.6L1062.6 153Z" stroke="#a23bb5" fill="#d490de" stroke-width="1.2" stroke-linejoin="round"/>
<path d="M1077.6 144.9L1080.5 147.8L1083.4 144.9" stroke="#242424" stroke-width="1.3" fill="none" stroke-linecap="round" stroke-linejoin="round"/>
<path d="M1121.6 94.6H1136.6L1131.4 101.6V109.4H1127.2V101.6Z" stroke="#3b3b3b" fill="#fafafa" stroke-width="1.1" stroke-linejoin="round"/>
<path d="M1133.6 142.4L1136.45 145.3L1139.3 142.4" stroke="#242424" stroke-width="1.3" fill="none" stroke-linecap="round" stroke-linejoin="round"/>
<circle cx="1172.5" cy="97.4" r="10" fill="#fafafa" stroke="#3b3b3b" stroke-width="1.1" />
<path d="M1165.2 104.6L1154.6 115.4" stroke="#3b3b3b" stroke-width="1.2" fill="none" />
<path d="M1182.6 142.4L1185.5 145.3L1188.4 142.4" stroke="#242424" stroke-width="1.3" fill="none" stroke-linecap="round" stroke-linejoin="round"/>
<rect x="1218.6" y="87.6" width="27" height="27" fill="#fff" stroke="#e23b1e" stroke-width="1.2" rx="0" />
<rect x="1221.4" y="90.4" width="9" height="9" fill="#fff" stroke="#e23b1e" stroke-width="1.1" rx="0" />
<rect x="1233.6" y="90.4" width="9" height="9" fill="#fff" stroke="#e23b1e" stroke-width="1.1" rx="0" />
<rect x="1221.4" y="102.6" width="9" height="9" fill="#fff" stroke="#e23b1e" stroke-width="1.1" rx="0" />
<rect x="1233.6" y="102.6" width="9" height="9" fill="#fff" stroke="#e23b1e" stroke-width="1.1" rx="0" />
<rect x="1281.6" y="87.6" width="27" height="27" fill="#f6f6f6" stroke="#3b3b3b" stroke-width="1.1" rx="0" />
<rect x="1282.2" y="88.2" width="25.8" height="3.2" fill="#c8c8c8" stroke="none" stroke-width="1" rx="0" />
<path d="M1281.6 99.6H1308.6M1281.6 107.6H1308.6M1290.6 107.6V114.6M1299.6 107.6V114.6" stroke="#7a7a7a" fill="none" stroke-width="1" />
<circle cx="1294.2" cy="99" r="8.8" fill="#fff" stroke="#3b3b3b" stroke-width="1.1" />
<path d="M1300.6 105.6L1308.4 114.2" stroke="#3b3b3b" stroke-width="1.3" fill="none" />
<rect x="1289.8" y="97.6" width="2.6" height="5" fill="#c8c8c8" stroke="#7a7a7a" stroke-width="0.7" rx="0" />
<rect x="1292.8" y="94.4" width="2.6" height="8.2" fill="#fff" stroke="#5a5a5a" stroke-width="0.8" rx="0" />
<rect x="1295.8" y="96" width="2.8" height="6.6" fill="#1f7ad8" stroke="#1f7ad8" stroke-width="0.6" rx="0" />
<path d="M1338.9 162.2L1343.65 166.9L1348.4 162.2" stroke="#242424" stroke-width="1.2" fill="none" stroke-linecap="round" stroke-linejoin="round"/></svg>
<div class="a" style="left:8.4px;top:186.4px;width:101.2px;height:25.2px;background:#fff;border:1px solid #d6d6d6;border-radius:5px"></div>
<span class="t" style="left:14.9px;top:192px;font-size:14.8px;color:#242424;transform:scaleX(0.9718);">AG42</span>
<div class="a" style="left:130.4px;top:186.4px;width:85.2px;height:25.2px;background:#fff;border:1px solid #d6d6d6;border-radius:5px"></div>
<span class="t" style="left:183.41px;top:190px;font-size:17px;color:#242424;font-style:italic;font-family:'Liberation Serif',serif;transform:scaleX(1.1306);-webkit-text-stroke:.3px #242424;">f</span>
<span class="t" style="left:191.06px;top:191px;font-size:15.4px;color:#242424;font-style:italic;font-family:'Liberation Serif',serif;transform:scaleX(1.1132);-webkit-text-stroke:.3px #242424;">x</span>
<div class="a" style="left:220px;top:186.4px;width:1138px;height:25.2px;background:#fff;border:1px solid #d6d6d6;border-radius:5px"></div>
<div class="a" style="left:0px;top:219px;width:1344px;height:455.5px;background:#fff;border-top:1px solid #d9d9d9;border-right:1px solid #d4d4d4;border-bottom:1px solid #cfcfcf"></div>
<div class="a" style="left:1px;top:219.4px;width:700px;height:430.4px;background:#d9d9d9"></div>
<div class="a" style="left:0px;top:219.4px;width:1px;height:430.4px;background:#e4e4e4"></div>
<span class="t" style="left:19.63px;top:223px;font-size:11.6px;color:#0d0d0d;font-weight:700;transform:scaleX(0.9455);">Sales Trend</span>
<span class="t" style="left:21.15px;top:352px;font-size:11.6px;color:#0d0d0d;font-weight:700;transform:scaleX(0.9630);">Customer Type</span>
<span class="t" style="left:163.76px;top:353px;font-size:11.6px;color:#0d0d0d;font-weight:700;transform:scaleX(0.9873);">Payment Type</span>
<span class="t" style="left:312.26px;top:354px;font-size:11.6px;color:#0d0d0d;font-weight:700;transform:scaleX(0.9587);">Customer Gender</span>
<span class="t" style="left:476.45px;top:223px;font-size:11.6px;color:#0d0d0d;font-weight:700;transform:scaleX(0.9706);">Gross Income (Monthly)</span>
<span class="t" style="left:496.68px;top:354px;font-size:11.6px;color:#0d0d0d;font-weight:700;transform:scaleX(0.9493);">Revenue Per Product Line</span>
<span class="t" style="left:490.35px;top:505px;font-size:11.6px;color:#0d0d0d;font-weight:700;transform:scaleX(0.9640);">Order Quantity Per Product Line</span>
<span class="t" style="left:23.87px;top:506px;font-size:11.6px;color:#0d0d0d;font-weight:700;transform:scaleX(0.9691);">Filters</span>
<div class="a" style="left:461px;top:227px;width:1.4px;height:415px;background:#111"></div>
<div class="a" style="left:17px;top:246px;width:430px;height:101px;background:#f2f2f2;border-radius:5px"></div>
<div class="a" style="left:36px;top:254px;width:363px;height:73.4px;background:linear-gradient(#fff 0%,#fefefe 35%,#f3f3f3 100%)"></div>
<span class="t" style="left:21.16px;top:252px;font-size:5.4px;color:#4d4d4d;transform:scaleX(0.8827);">2000</span>
<span class="t" style="left:21.04px;top:262px;font-size:5.4px;color:#4d4d4d;transform:scaleX(0.8931);">1900</span>
<span class="t" style="left:21.04px;top:273px;font-size:5.4px;color:#4d4d4d;transform:scaleX(0.8931);">1800</span>
<span class="t" style="left:21.04px;top:283px;font-size:5.4px;color:#4d4d4d;transform:scaleX(0.8931);">1700</span>
<span class="t" style="left:21.04px;top:293px;font-size:5.4px;color:#4d4d4d;transform:scaleX(0.8931);">1600</span>
<span class="t" style="left:21.04px;top:304px;font-size:5.4px;color:#4d4d4d;transform:scaleX(0.8931);">1500</span>
<span class="t" style="left:21.04px;top:314px;font-size:5.4px;color:#4d4d4d;transform:scaleX(0.8931);">1400</span>
<span class="t" style="left:21.04px;top:325px;font-size:5.4px;color:#4d4d4d;transform:scaleX(0.8931);">1300</span>
<span class="t" style="left:32.44px;top:332px;font-size:5.4px;color:#4d4d4d;transform:scaleX(0.7962);">Jan</span>
<span class="t" style="left:213.66px;top:332px;font-size:5.4px;color:#4d4d4d;transform:scaleX(0.7870);">Feb</span>
<span class="t" style="left:393.58px;top:332px;font-size:5.4px;color:#4d4d4d;transform:scaleX(0.9771);">Mar</span>
<div class="a" style="left:415px;top:269px;width:24px;height:5.8px;background:linear-gradient(#dcdcdc,#c4c4c4);border-radius:.5px"></div>
<span class="t" style="left:418.42px;top:271px;font-size:4.6px;color:#333;font-weight:700;transform:scaleX(0.6155);">Branch</span>
<span class="t" style="left:432.6px;top:280px;font-size:5.4px;color:#4d4d4d;transform:scaleX(0.6962);">A</span>
<span class="t" style="left:432.23px;top:294px;font-size:5.4px;color:#4d4d4d;transform:scaleX(0.8654);">B</span>
<span class="t" style="left:432.4px;top:307px;font-size:5.4px;color:#4d4d4d;transform:scaleX(0.7291);">C</span>
<span class="t" style="left:431.42px;top:339px;font-size:4px;color:#777;">+</span>
<span class="t" style="left:438.04px;top:339px;font-size:4px;color:#777;">-</span>
<svg class="a" style="left:0;top:0" width="1366" height="768" viewBox="0 0 1366 768"><path d="M94.6 198.2L99.2 203L103.8 198.2" stroke="#242424" stroke-width="1.2" fill="none" stroke-linecap="round" stroke-linejoin="round"/>
<rect x="119.3" y="194.8" width="1.7" height="1.7" fill="#242424" stroke="none" stroke-width="1" rx="0" />
<rect x="119.3" y="198.6" width="1.7" height="1.7" fill="#242424" stroke="none" stroke-width="1" rx="0" />
<rect x="119.3" y="202.4" width="1.7" height="1.7" fill="#242424" stroke="none" stroke-width="1" rx="0" />
<path d="M137 193.2L148.8 205M148.8 193.2L137 205" stroke="#b0b0b0" fill="none" stroke-width="1.1" />
<path d="M159.2 199.6L164.4 204.8L174.8 194" stroke="#b0b0b0" fill="none" stroke-width="1.1" />
<path d="M203.6 197.4L208.5 202.4L213.4 197.4" stroke="#9a9a9a" stroke-width="1.1" fill="none" stroke-linecap="round" stroke-linejoin="round"/>
<path d="M1343.8 195.2L1348.5 200.1L1353.2 195.2" stroke="#242424" stroke-width="1.2" fill="none" stroke-linecap="round" stroke-linejoin="round"/>
<path d="M36 327.3L399 327.3" stroke="#c4c4c4" stroke-width="0.8" fill="none" />
<path d="M36.3 254L36.3 327.3" stroke="#d0d0d0" stroke-width="0.6" fill="none" />
<path d="M217.5 291L217.5 327.3" stroke="#d9d9d9" stroke-width="0.6" fill="none" />
<path d="M36 261C100 274 160 297 217.5 298.8C280 300 340 288 399 277.4" stroke="#a5a5a5" fill="none" stroke-width="0.9" />
<path d="M36 276.9C100 281 160 289.5 217.5 291C280 292.4 340 291 399 290.2" stroke="#ed7d31" fill="none" stroke-width="0.9" />
<path d="M36 270C100 285 160 312 217.5 314C280 315.6 340 292 399 275.3" stroke="#4472c4" fill="none" stroke-width="1" />
<circle cx="36" cy="270" r="0.8" fill="#4472c4" stroke="none" stroke-width="1" />
<circle cx="217.5" cy="314" r="0.8" fill="#4472c4" stroke="none" stroke-width="1" />
<circle cx="399" cy="275.3" r="0.8" fill="#4472c4" stroke="none" stroke-width="1" />
<circle cx="36" cy="276.9" r="0.8" fill="#ed7d31" stroke="none" stroke-width="1" />
<circle cx="217.5" cy="291" r="0.8" fill="#ed7d31" stroke="none" stroke-width="1" />
<circle cx="399" cy="290.2" r="0.8" fill="#ed7d31" stroke="none" stroke-width="1" />
<circle cx="36" cy="261" r="0.8" fill="#a5a5a5" stroke="none" stroke-width="1" />
<circle cx="217.5" cy="298.8" r="0.8" fill="#a5a5a5" stroke="none" stroke-width="1" />
<circle cx="399" cy="277.4" r="0.8" fill="#a5a5a5" stroke="none" stroke-width="1" />
<path d="M433.4 270.6H437.8L435.6 273.4Z" stroke="#111" fill="#111" stroke-width="0.3" />
<path d="M420 282.3L432 282.3" stroke="#4472c4" stroke-width="0.8" fill="none" />
<circle cx="426" cy="282.3" r="0.7" fill="#4472c4" stroke="none" stroke-width="1" />
<path d="M420 296.2L432 296.2" stroke="#ed7d31" stroke-width="0.8" fill="none" />
<circle cx="426" cy="296.2" r="0.7" fill="#ed7d31" stroke="none" stroke-width="1" />
<path d="M420 309.4L432 309.4" stroke="#a5a5a5" stroke-width="0.8" fill="none" />
<circle cx="426" cy="309.4" r="0.7" fill="#a5a5a5" stroke="none" stroke-width="1" />
<rect x="430" y="337.5" width="5.4" height="5.4" fill="#cfcfcf" stroke="none" stroke-width="1" rx="0" />
<rect x="436.4" y="337.5" width="5.4" height="5.4" fill="#cfcfcf" stroke="none" stroke-width="1" rx="0" /></svg>
<div class="a" style="left:16px;top:371px;width:141px;height:121px;background:#f2f2f2;border:1px solid #c0c0c0;border-radius:5px"></div>
<span class="t" style="left:38.56px;top:430px;font-size:5.6px;color:#fff;font-weight:700;transform:scaleX(0.8174);">88; 51%</span>
<span class="t" style="left:88.66px;top:428px;font-size:5.6px;color:#fff;font-weight:700;transform:scaleX(0.8174);">87; 49%</span>
<span class="t" style="left:133.84px;top:425px;font-size:5.4px;color:#4d4d4d;transform:scaleX(0.8392);">Member</span>
<span class="t" style="left:133.84px;top:434px;font-size:5.4px;color:#4d4d4d;transform:scaleX(0.8418);">Normal</span>
<div class="a" style="left:161px;top:371px;width:143px;height:120px;background:#f2f2f2;border:1px solid #c0c0c0;border-radius:5px"></div>
<span class="t" style="left:192.26px;top:413px;font-size:5.6px;color:#fff;font-weight:700;transform:scaleX(0.8538);">28%</span>
<span class="t" style="left:234.53px;top:427px;font-size:5.6px;color:#fff;font-weight:700;transform:scaleX(0.8655);">46%</span>
<span class="t" style="left:197.26px;top:449px;font-size:5.6px;color:#fff;font-weight:700;transform:scaleX(0.8538);">26%</span>
<span class="t" style="left:275.79px;top:420px;font-size:5.4px;color:#4d4d4d;transform:scaleX(0.7657);">Cash</span>
<span class="t" style="left:275.78px;top:429px;font-size:5.4px;color:#4d4d4d;transform:scaleX(0.8136);">Credit card</span>
<span class="t" style="left:275.64px;top:438px;font-size:5.4px;color:#4d4d4d;transform:scaleX(0.8434);">Ewallet</span>
<div class="a" style="left:307px;top:371px;width:143px;height:120px;background:#f2f2f2;border:1px solid #c0c0c0;border-radius:5px"></div>
<span class="t" style="left:334.36px;top:430px;font-size:5.6px;color:#fff;font-weight:700;transform:scaleX(0.8538);">51%</span>
<span class="t" style="left:386.53px;top:429px;font-size:5.6px;color:#fff;font-weight:700;transform:scaleX(0.8655);">49%</span>
<span class="t" style="left:428.63px;top:424px;font-size:5.4px;color:#4d4d4d;transform:scaleX(0.8467);">Female</span>
<span class="t" style="left:428.58px;top:433px;font-size:5.4px;color:#4d4d4d;transform:scaleX(0.9689);">Male</span>
<div class="a" style="left:473px;top:245px;width:195px;height:103px;background:#f2f2f2;border:1px solid #c0c0c0;border-radius:5px;overflow:hidden"></div>
<span class="t" style="left:512.57px;top:316px;font-size:5.4px;color:#fff;font-weight:700;transform:scaleX(0.8280);">947.1625</span>
<span class="t" style="left:549.33px;top:270px;font-size:5.4px;color:#fff;font-weight:700;transform:scaleX(0.8182);">1269.5555</span>
<span class="t" style="left:588.67px;top:318px;font-size:5.4px;color:#fff;font-weight:700;transform:scaleX(0.8145);">989.7295</span>
<span class="t" style="left:553.5px;top:345px;font-size:5.4px;color:#4d4d4d;transform:scaleX(0.9122);clip-path:inset(0 0 62% 0);">Total</span>
<div class="a" style="left:638.1px;top:279.1px;width:23.8px;height:5.8px;background:linear-gradient(#dcdcdc,#c4c4c4);border-radius:.5px"></div>
<span class="t" style="left:641.42px;top:281px;font-size:4.6px;color:#333;font-weight:700;transform:scaleX(0.6155);">Branch</span>
<span class="t" style="left:643.7px;top:289px;font-size:5.4px;color:#4d4d4d;transform:scaleX(0.6962);">A</span>
<span class="t" style="left:643.33px;top:298px;font-size:5.4px;color:#4d4d4d;transform:scaleX(0.8654);">B</span>
<span class="t" style="left:643.5px;top:307px;font-size:5.4px;color:#4d4d4d;transform:scaleX(0.7291);">C</span>
<div class="a" style="left:474px;top:374px;width:193px;height:117px;background:#f2f2f2;border-radius:5px"></div>
<span class="t" style="left:475.75px;top:389px;font-size:5.4px;color:#4d4d4d;transform:scaleX(0.8059);">Electronic accessories</span>
<span class="t" style="left:480.46px;top:414px;font-size:5.4px;color:#4d4d4d;transform:scaleX(0.7840);">Fashion accessories</span>
<span class="t" style="left:485.1px;top:439px;font-size:5.4px;color:#4d4d4d;transform:scaleX(0.8346);">Sports and travel</span>
<span class="t" style="left:481.64px;top:464px;font-size:5.4px;color:#4d4d4d;transform:scaleX(0.8431);">Home and lifestyle</span>
<span class="t" style="left:522.11px;top:483px;font-size:5.4px;color:#4d4d4d;transform:scaleX(0.7255);">0</span>
<span class="t" style="left:535.29px;top:483px;font-size:5.4px;color:#4d4d4d;transform:scaleX(0.7705);">1000</span>
<span class="t" style="left:551.79px;top:483px;font-size:5.4px;color:#4d4d4d;transform:scaleX(0.7615);">2000</span>
<span class="t" style="left:568.46px;top:483px;font-size:5.4px;color:#4d4d4d;transform:scaleX(0.7562);">3000</span>
<span class="t" style="left:585.12px;top:483px;font-size:5.4px;color:#4d4d4d;transform:scaleX(0.7510);">4000</span>
<span class="t" style="left:601.64px;top:483px;font-size:5.4px;color:#4d4d4d;transform:scaleX(0.7580);">5000</span>
<span class="t" style="left:618.19px;top:483px;font-size:5.4px;color:#4d4d4d;transform:scaleX(0.7615);">6000</span>
<span class="t" style="left:634.99px;top:483px;font-size:5.4px;color:#4d4d4d;transform:scaleX(0.7615);">7000</span>
<span class="t" style="left:651.44px;top:483px;font-size:5.4px;color:#4d4d4d;transform:scaleX(0.7580);">8000</span>
<div class="a" style="left:476px;top:524px;width:192px;height:116px;background:#f2f2f2;border-radius:5px"></div>
<span class="t" style="left:477.45px;top:539px;font-size:5.4px;color:#4d4d4d;transform:scaleX(0.8078);">Electronic accessories</span>
<span class="t" style="left:481.66px;top:564px;font-size:5.4px;color:#4d4d4d;transform:scaleX(0.7963);">Fashion accessories</span>
<span class="t" style="left:486.9px;top:588px;font-size:5.4px;color:#4d4d4d;transform:scaleX(0.8346);">Sports and travel</span>
<span class="t" style="left:483.44px;top:613px;font-size:5.4px;color:#4d4d4d;transform:scaleX(0.8431);">Home and lifestyle</span>
<span class="t" style="left:523.81px;top:632px;font-size:5.4px;color:#4d4d4d;transform:scaleX(0.7255);">0</span>
<span class="t" style="left:541.4px;top:632px;font-size:5.4px;color:#4d4d4d;transform:scaleX(0.7588);">20</span>
<span class="t" style="left:560.62px;top:632px;font-size:5.4px;color:#4d4d4d;transform:scaleX(0.7372);">40</span>
<span class="t" style="left:579.3px;top:632px;font-size:5.4px;color:#4d4d4d;transform:scaleX(0.7588);">60</span>
<span class="t" style="left:598.54px;top:632px;font-size:5.4px;color:#4d4d4d;transform:scaleX(0.7515);">80</span>
<span class="t" style="left:616.74px;top:632px;font-size:5.4px;color:#4d4d4d;transform:scaleX(0.7741);">100</span>
<span class="t" style="left:635.74px;top:632px;font-size:5.4px;color:#4d4d4d;transform:scaleX(0.7741);">120</span>
<span class="t" style="left:654.54px;top:632px;font-size:5.4px;color:#4d4d4d;transform:scaleX(0.7741);">140</span>
<div class="a" style="left:17.8px;top:523px;width:432.4px;height:111.8px;background:#f2f2f2;border:1.4px solid #2f5496;border-radius:9px"></div>
<span class="t" style="left:34.97px;top:539px;font-size:11.8px;color:#0d0d0d;font-weight:700;transform:scaleX(0.9528);">Branch:</span>
<span class="t" style="left:236.92px;top:541px;font-size:11.8px;color:#0d0d0d;font-weight:700;transform:scaleX(1.0110);">Months:</span>
<span class="t" style="left:34.98px;top:590px;font-size:11.8px;color:#0d0d0d;font-weight:700;transform:scaleX(0.9439);">Product Line:</span>
<div class="a" style="left:79px;top:537px;width:142px;height:18px;background:#fff;border:1px solid #5b9bd5"></div>
<div class="a" style="left:82px;top:540px;width:44px;height:10px;background:#fff;border:1px solid #cdcdcd;border-radius:3.6px"></div>
<span class="t" style="left:86px;top:543px;font-size:5.3px;color:#262626;transform:scaleX(0.9000);">A</span>
<div class="a" style="left:127px;top:540px;width:44px;height:10px;background:#bdd7ee;border:1px solid #8a8f99;border-radius:3.6px"></div>
<span class="t" style="left:130.52px;top:543px;font-size:5.3px;color:#262626;transform:scaleX(0.9000);">B</span>
<div class="a" style="left:172px;top:540px;width:45px;height:10px;background:#fff;border:1px solid #cdcdcd;border-radius:3.6px"></div>
<span class="t" style="left:175.76px;top:543px;font-size:5.3px;color:#262626;transform:scaleX(0.9000);">C</span>
<div class="a" style="left:285px;top:538px;width:145px;height:19px;background:#fff;border:1px solid #5b9bd5"></div>
<div class="a" style="left:288px;top:542px;width:45px;height:10px;background:#fff;border:1px solid #cdcdcd;border-radius:3.6px"></div>
<span class="t" style="left:292.13px;top:545px;font-size:5.3px;color:#262626;transform:scaleX(0.9000);">Jan</span>
<div class="a" style="left:334px;top:542px;width:45px;height:10px;background:#bdd7ee;border:1px solid #8a8f99;border-radius:3.6px"></div>
<span class="t" style="left:337.82px;top:545px;font-size:5.3px;color:#262626;transform:scaleX(0.9000);">Feb</span>
<div class="a" style="left:380px;top:542px;width:45px;height:10px;background:#fff;border:1px solid #cdcdcd;border-radius:3.6px"></div>
<span class="t" style="left:383.82px;top:545px;font-size:5.3px;color:#262626;transform:scaleX(0.9000);">Mar</span>
<div class="a" style="left:117px;top:576px;width:313px;height:43px;background:#fff;border:1px solid #5b9bd5"></div>
<div class="a" style="left:121px;top:578px;width:152px;height:10px;background:#bdd7ee;border:1px solid #8a8f99;border-radius:3.6px"></div>
<span class="t" style="left:124.62px;top:581px;font-size:5.3px;color:#262626;transform:scaleX(0.9000);">Electronic accessories</span>
<div class="a" style="left:274px;top:578px;width:152px;height:10px;background:#bdd7ee;border:1px solid #8a8f99;border-radius:3.6px"></div>
<span class="t" style="left:277.62px;top:581px;font-size:5.3px;color:#262626;transform:scaleX(0.9000);">Fashion accessories</span>
<div class="a" style="left:121px;top:589px;width:152px;height:10px;background:#fff;border:1px solid #cdcdcd;border-radius:3.6px"></div>
<span class="t" style="left:124.62px;top:592px;font-size:5.3px;color:#262626;transform:scaleX(0.9000);">Food and beverages</span>
<div class="a" style="left:274px;top:589px;width:152px;height:10px;background:#fff;border:1px solid #cdcdcd;border-radius:3.6px"></div>
<span class="t" style="left:277.62px;top:592px;font-size:5.3px;color:#262626;transform:scaleX(0.9000);">Health and beauty</span>
<div class="a" style="left:121px;top:600px;width:152px;height:10px;background:#bdd7ee;border:1px solid #8a8f99;border-radius:3.6px"></div>
<span class="t" style="left:124.62px;top:603px;font-size:5.3px;color:#262626;transform:scaleX(0.9000);">Home and lifestyle</span>
<div class="a" style="left:274px;top:600px;width:152px;height:10px;background:#bdd7ee;border:1px solid #8a8f99;border-radius:3.6px"></div>
<span class="t" style="left:277.79px;top:603px;font-size:5.3px;color:#262626;transform:scaleX(0.9000);">Sports and travel</span>
<div class="a" style="left:830px;top:505px;width:29px;height:11px;border:2px solid #107c41;background:#fff"></div>
<div class="a" style="left:854px;top:511px;width:7px;height:7px;background:#107c41;border:1px solid #fff;border-right:0;border-bottom:0;width:6px;height:6px"></div>
<div class="a" style="left:1346.6px;top:219.6px;width:19.4px;height:455px;background:#f5f5f5;border-radius:9px 0 0 9px"></div>
<svg class="a" style="left:0;top:0" width="1366" height="768" viewBox="0 0 1366 768"><defs><filter id="bl" x="-20%" y="-20%" width="140%" height="140%"><feGaussianBlur stdDeviation="2.2"/></filter></defs>
<circle cx="72" cy="432.8" r="50.6" fill="#000" opacity=".26" filter="url(#bl)"/>
<path d="M72 431.4L72 381.2A50.2 50.2 0 0 1 75.15 481.5Z" fill="#b4c7e7" stroke="#b4c7e7" stroke-width=".3"/>
<path d="M72 431.4L75.15 481.5A50.2 50.2 0 1 1 72 381.2Z" fill="#dae3f3" stroke="#dae3f3" stroke-width=".3"/>
<rect x="38" y="429.1" width="19.6" height="7.6" fill="#000" stroke="none" stroke-width="1" rx="0" opacity=".25"/>
<rect x="37.3" y="428.2" width="19.6" height="7.6" fill="#2e2e2e" stroke="none" stroke-width="1" rx="0" />
<rect x="88.1" y="427.2" width="19.6" height="7.5" fill="#000" stroke="none" stroke-width="1" rx="0" opacity=".25"/>
<rect x="87.4" y="426.3" width="19.6" height="7.5" fill="#2e2e2e" stroke="none" stroke-width="1" rx="0" />
<rect x="130.2" y="426.4" width="2.4" height="2.4" fill="#b4c7e7" stroke="none" stroke-width="1" rx="0" />
<rect x="130.2" y="435.2" width="2.4" height="2.4" fill="#dae3f3" stroke="none" stroke-width="1" rx="0" />
<circle cx="215.4" cy="432.2" r="48.7" fill="#000" opacity=".26" filter="url(#bl)"/>
<path d="M215.4 430.8L215.4 382.5A48.3 48.3 0 0 1 227.41 477.58Z" fill="#8faadc" stroke="#8faadc" stroke-width=".3"/>
<path d="M215.4 430.8L227.41 477.58A48.3 48.3 0 0 1 167.96 439.85Z" fill="#b4c7e7" stroke="#b4c7e7" stroke-width=".3"/>
<path d="M215.4 430.8L167.96 439.85A48.3 48.3 0 0 1 215.4 382.5Z" fill="#dae3f3" stroke="#dae3f3" stroke-width=".3"/>
<rect x="191.7" y="412.1" width="12.1" height="7.5" fill="#000" stroke="none" stroke-width="1" rx="0" opacity=".25"/>
<rect x="191" y="411.2" width="12.1" height="7.5" fill="#2e2e2e" stroke="none" stroke-width="1" rx="0" />
<rect x="233.9" y="425.2" width="12.3" height="7.9" fill="#000" stroke="none" stroke-width="1" rx="0" opacity=".25"/>
<rect x="233.2" y="424.3" width="12.3" height="7.9" fill="#2e2e2e" stroke="none" stroke-width="1" rx="0" />
<rect x="196.7" y="448.2" width="12.1" height="7.7" fill="#000" stroke="none" stroke-width="1" rx="0" opacity=".25"/>
<rect x="196" y="447.3" width="12.1" height="7.7" fill="#2e2e2e" stroke="none" stroke-width="1" rx="0" />
<rect x="272.1" y="421" width="2.4" height="2.4" fill="#8faadc" stroke="none" stroke-width="1" rx="0" />
<rect x="272.1" y="430.3" width="2.4" height="2.4" fill="#b4c7e7" stroke="none" stroke-width="1" rx="0" />
<rect x="272.1" y="439.2" width="2.4" height="2.4" fill="#dae3f3" stroke="none" stroke-width="1" rx="0" />
<circle cx="365.1" cy="432.3" r="52.4" fill="#000" opacity=".26" filter="url(#bl)"/>
<path d="M365.1 430.9L365.1 378.9A52 52 0 0 1 368.37 482.8Z" fill="#ff75fb" stroke="#ff75fb" stroke-width=".3"/>
<path d="M365.1 430.9L368.37 482.8A52 52 0 1 1 365.1 378.9Z" fill="#8faadc" stroke="#8faadc" stroke-width=".3"/>
<rect x="333.8" y="429.1" width="12.1" height="7.6" fill="#000" stroke="none" stroke-width="1" rx="0" opacity=".25"/>
<rect x="333.1" y="428.2" width="12.1" height="7.6" fill="#2e2e2e" stroke="none" stroke-width="1" rx="0" />
<rect x="385.9" y="427.2" width="12.3" height="7.9" fill="#000" stroke="none" stroke-width="1" rx="0" opacity=".25"/>
<rect x="385.2" y="426.3" width="12.3" height="7.9" fill="#2e2e2e" stroke="none" stroke-width="1" rx="0" />
<rect x="425.2" y="424.8" width="2.8" height="2.8" fill="#ff75fb" stroke="none" stroke-width="1" rx="0" />
<rect x="425.2" y="433.9" width="2.8" height="2.8" fill="#8faadc" stroke="none" stroke-width="1" rx="0" />
<path d="M490.2 250.6L628.6 250.6" stroke="#d0d0d0" stroke-width="0.6" fill="none" />
<path d="M490.2 265.4L628.6 265.4" stroke="#cacaca" stroke-width="0.6" fill="none" />
<path d="M490.2 280.3L628.6 280.3" stroke="#bdbdbd" stroke-width="0.6" fill="none" />
<path d="M490.2 296.5L628.6 296.5" stroke="#a9a9a9" stroke-width="0.6" fill="none" />
<path d="M490.2 311.5L628.6 311.5" stroke="#8c8c8c" stroke-width="0.6" fill="none" />
<path d="M490.2 326.3L628.6 326.3" stroke="#6a6a6a" stroke-width="0.6" fill="none" />
<rect x="502.6" y="313" width="37.7" height="28" fill="#5b84cf" stroke="none" stroke-width="1" rx="0" />
<rect x="541" y="266.8" width="37.3" height="74.2" fill="#ef8d4f" stroke="none" stroke-width="1" rx="0" />
<defs><pattern id="dots" width="1.6" height="1.6" patternUnits="userSpaceOnUse"><rect width="1.6" height="1.6" fill="#a9a9a9"/><rect width=".8" height=".8" fill="#9c9c9c"/></pattern></defs>
<rect x="578.7" y="314.9" width="37.5" height="26.1" fill="url(#dots)" stroke="none" stroke-width="1" rx="0" />
<path d="M490.2 326.3L502.6 326.3" stroke="#555" stroke-width="0.6" fill="none" />
<path d="M616.2 326.3L628.6 326.3" stroke="#555" stroke-width="0.6" fill="none" />
<path d="M490.2 341.2L628.6 341.2" stroke="#111" stroke-width="0.9" fill="none" />
<path d="M656.4 280.7H660.8L658.6 283.5Z" stroke="#111" fill="#111" stroke-width="0.3" />
<rect x="640.8" y="289.9" width="1.7" height="2.4" fill="#4472c4" stroke="none" stroke-width="1" rx="0" />
<rect x="640.8" y="298.9" width="1.7" height="2.4" fill="#ed7d31" stroke="none" stroke-width="1" rx="0" />
<rect x="640.8" y="308" width="1.7" height="2.4" fill="#a5a5a5" stroke="none" stroke-width="1" rx="0" />
<path d="M523.4 378.3L523.4 479.3" stroke="#c3c3c3" stroke-width="0.6" fill="none" />
<rect x="524" y="387.1" width="109.9" height="8.8" fill="#8faadc" stroke="none" stroke-width="1" rx="0" />
<rect x="524" y="412.1" width="101" height="8.8" fill="#8faadc" stroke="none" stroke-width="1" rx="0" />
<rect x="524" y="437.1" width="91" height="8.8" fill="#8faadc" stroke="none" stroke-width="1" rx="0" />
<rect x="524" y="462.1" width="76.9" height="8.8" fill="#8faadc" stroke="none" stroke-width="1" rx="0" />
<path d="M524.5 528.3L524.5 627.2" stroke="#c3c3c3" stroke-width="0.6" fill="none" />
<rect x="525.1" y="536.9" width="112" height="8.9" fill="#8faadc" stroke="none" stroke-width="1" rx="0" />
<rect x="525.1" y="561.9" width="112" height="8" fill="#8faadc" stroke="none" stroke-width="1" rx="0" />
<rect x="525.1" y="586" width="90.8" height="8.9" fill="#8faadc" stroke="none" stroke-width="1" rx="0" />
<rect x="525.1" y="611" width="78.8" height="8.9" fill="#8faadc" stroke="none" stroke-width="1" rx="0" />
<path d="M1351.2 230.6L1355.5 224.6L1359.8 230.6Z" stroke="#737373" fill="#737373" stroke-width="0.8" stroke-linejoin="round"/>
<rect x="1351" y="270.8" width="9" height="388.4" fill="#737373" stroke="none" stroke-width="1" rx="4.5" />
<path d="M1351.2 665.6L1355.5 671.8L1359.8 665.6Z" stroke="#737373" fill="#737373" stroke-width="0.8" stroke-linejoin="round"/></svg>
<div class="a" style="left:0px;top:674.6px;width:1366px;height:31.2px;background:#f0f0f0"></div>
<div class="a" style="left:0px;top:705.8px;width:1366px;height:22.4px;background:#f3f3f3;border-top:1px solid #f8f8f8"></div>
<div class="a" style="left:0px;top:728.2px;width:1366px;height:39.8px;background:#222633"></div>
<div class="a" style="left:441.2px;top:728.2px;width:47.8px;height:39.8px;background:#585a63"></div>
<span class="t" style="left:598.2px;top:671.4px;font-size:56px;color:#bcbcbc;font-weight:700;font-family:'DejaVu Sans','Liberation Sans',sans-serif;transform:scaleX(0.8300);z-index:0;opacity:.5;-webkit-text-stroke:1px #bcbcbc;">مستقل</span>
<span class="t" style="left:599.4px;top:725px;font-size:27.4px;color:#bcbcbc;transform:scaleX(1.0770);z-index:0;opacity:.46;-webkit-text-stroke:1px #bcbcbc;">mostaql.com</span>
<div class="a" style="left:616px;top:678.4px;width:22.6px;height:22.6px;background:rgba(255,255,255,.55);border-radius:4px"></div>
<span class="t" style="left:126.31px;top:684px;font-size:13.6px;color:#242424;">Revenue Per Product line</span>
<span class="t" style="left:311.37px;top:684px;font-size:13.6px;color:#242424;transform:scaleX(1.0222);">Quantity Per Product Line</span>
<div class="a" style="left:489.4px;top:674.4px;width:86.4px;height:28px;background:#fff;border-radius:0 0 5px 5px;box-shadow:0 0.5px 2px rgba(0,0,0,.28)"></div>
<span class="t" style="left:497.55px;top:681px;font-size:13.6px;color:#1a1a1a;transform:scaleX(1.0542);-webkit-text-stroke:.45px #1a1a1a;">Dashboard</span>
<div class="a" style="left:498px;top:696.4px;width:69px;height:2.4px;background:#107c41;border-radius:1px"></div>
<div class="a" style="left:838.4px;top:680.4px;width:510px;height:18.6px;background:#f6f6f6;border-radius:9px"></div>
<span class="t" style="left:10.33px;top:712px;font-size:11.7px;color:#242424;transform:scaleX(0.9307);">Ready</span>
<span class="t" style="left:112.5px;top:711px;font-size:11.7px;color:#2a2a2a;transform:scaleX(0.9913);-webkit-text-stroke:.45px #2a2a2a;">Accessibility: Investigate</span>
<div class="a" style="left:630.4px;top:709.6px;width:58.6px;height:18px;background:#fff;border:1px solid #bdbdbd"></div>
<span class="t" style="left:631.87px;top:713px;font-size:11.9px;color:#5c5c5c;transform:scaleX(0.9816);">New sheet</span>
<div class="a" style="left:1066.2px;top:706px;width:40px;height:22px;background:#dadada"></div>
<span class="t" style="left:1330.79px;top:711px;font-size:11.7px;color:#242424;transform:scaleX(0.8964);">40%</span>
<svg class="a" style="left:0;top:0" width="1366" height="768" viewBox="0 0 1366 768"><path d="M34.6 685.2L28.6 689.8L34.6 694.4" stroke="#242424" fill="none" stroke-width="1.2" stroke-linecap="round" stroke-linejoin="round"/>
<path d="M61.8 685.2L67.6 689.8L61.8 694.4" stroke="#a6a6a6" fill="none" stroke-width="1.2" stroke-linecap="round" stroke-linejoin="round"/>
<circle cx="91" cy="689.6" r="1.25" fill="#242424" stroke="none" stroke-width="1" />
<circle cx="95.2" cy="689.6" r="1.25" fill="#242424" stroke="none" stroke-width="1" />
<circle cx="99.4" cy="689.6" r="1.25" fill="#242424" stroke="none" stroke-width="1" />
<path d="M296.3 681.5L296.3 698.6" stroke="#cfcfcf" stroke-width="1" fill="none" />
<path d="M485.6 681.5L485.6 698.6" stroke="#cfcfcf" stroke-width="1" fill="none" />
<path d="M579.6 681.5L579.6 698.6" stroke="#cfcfcf" stroke-width="1" fill="none" />
<path d="M622.4 689.8H633M627.7 684.5V695.1" stroke="#242424" fill="none" stroke-width="1.1" />
<circle cx="822" cy="686.6" r="1.05" fill="#242424" stroke="none" stroke-width="1" />
<circle cx="822" cy="690.8" r="1.05" fill="#242424" stroke="none" stroke-width="1" />
<circle cx="822" cy="695" r="1.05" fill="#242424" stroke="none" stroke-width="1" />
<path d="M849.8 685.4L843.6 689.7L849.8 694Z" stroke="#737373" fill="#737373" stroke-width="0.8" stroke-linejoin="round"/>
<rect x="854.6" y="685.3" width="472.6" height="8.8" fill="#737373" stroke="none" stroke-width="1" rx="4.4" />
<path d="M1335.4 685.4L1341.6 689.7L1335.4 694Z" stroke="#737373" fill="#737373" stroke-width="0.8" stroke-linejoin="round"/>
<rect x="62.3" y="711.2" width="13.6" height="11.6" fill="none" stroke="#3b3b3b" stroke-width="1.1" rx="0.6" />
<path d="M62.3 714L75.9 714" stroke="#3b3b3b" stroke-width="1" fill="none" />
<path d="M64.4 716.6L67.6 716.6" stroke="#3b3b3b" stroke-width="1" fill="none" />
<path d="M64.4 719.4L67 719.4" stroke="#3b3b3b" stroke-width="1" fill="none" />
<circle cx="71.4" cy="719.6" r="3.5" fill="#f3f3f3" stroke="#3b3b3b" stroke-width="1.1" />
<circle cx="71.4" cy="719.6" r="1.4" fill="#3b3b3b" stroke="none" stroke-width="1" />
<circle cx="101" cy="711.8" r="1.7" fill="none" stroke="#3b3b3b" stroke-width="1.1" />
<path d="M95 714.6Q101 716.8 107 714.6M101 716.2V719.2M101 719.2L97.4 724M100.4 718.6L97 723.6" stroke="#3b3b3b" fill="none" stroke-width="1.2" stroke-linecap="round" stroke-linejoin="round"/>
<path d="M103 718.8L108 723.8M108 718.8L103 723.8" stroke="#3b3b3b" fill="none" stroke-width="1.2" stroke-linecap="round"/>
<rect x="1079.6" y="711" width="12" height="12" fill="none" stroke="#242424" stroke-width="1.1" rx="0" />
<path d="M1083.6 711V723M1087.6 711V723M1079.6 715H1091.6M1079.6 719H1091.6" stroke="#242424" fill="none" stroke-width="1" />
<rect x="1119.4" y="711" width="13" height="12" fill="none" stroke="#242424" stroke-width="1.1" rx="0" />
<rect x="1122.4" y="713.8" width="7" height="6.6" fill="none" stroke="#242424" stroke-width="1" rx="0" />
<path d="M1124.2 716H1127.8M1124.2 718.2H1127.8" stroke="#242424" fill="none" stroke-width="0.9" />
<rect x="1159.6" y="711" width="12.8" height="12" fill="none" stroke="#242424" stroke-width="1.1" rx="0" />
<path d="M1159.6 717.6H1165.6V711M1168.8 711V717.6H1172.4" stroke="#242424" fill="none" stroke-width="1" />
<path d="M1192.4 716.8L1199.4 716.8" stroke="#242424" stroke-width="1.1" fill="none" />
<path d="M1205.2 717.4L1304.8 717.4" stroke="#6a6a6a" stroke-width="1" fill="none" />
<path d="M1255.3 714.6L1255.3 720.2" stroke="#6a6a6a" stroke-width="1" fill="none" />
<rect x="1221.4" y="712.2" width="4.4" height="10.4" fill="#5e5e5e" stroke="none" stroke-width="1" rx="0.6" />
<path d="M1309.8 716.8H1317.2M1313.5 713.1V720.5" stroke="#242424" fill="none" stroke-width="1.1" /></svg>
<div class="a" style="left:249px;top:766px;width:31.2px;height:2px;background:#76b9ed"></div>
<div class="a" style="left:298px;top:766px;width:40px;height:2px;background:#76b9ed"></div>
<div class="a" style="left:441.2px;top:766px;width:47.8px;height:2px;background:#76b9ed"></div>
<div class="a" style="left:281px;top:766px;width:7.8px;height:2px;background:#6f7b8f"></div>
<span class="t" style="left:455.95px;top:744px;font-size:10.4px;color:#fff;font-weight:700;transform:scaleX(1.0276);">X</span>
<span class="t" style="left:503.6px;top:744px;font-size:10.4px;color:#fff;font-weight:700;">W</span>
<span class="t" style="left:703.18px;top:741px;font-size:8.6px;color:#6f9be6;font-weight:700;transform:scaleX(1.0336);">A</span>
<span class="t" style="left:711.4px;top:748.4px;font-size:7.6px;color:#fff;font-family:'Liberation Sans','Noto Sans CJK JP',sans-serif;">あ</span>
<span class="t" style="left:986.55px;top:742px;font-size:13.4px;color:#fff;transform:scaleX(0.9758);">MFPC</span>
<span class="t" style="left:1031.74px;top:742px;font-size:13.4px;color:#2fb843;transform:scaleX(0.9340);">+1,92%</span>
<span class="t" style="left:1219.51px;top:742px;font-size:11.7px;color:#fff;transform:scaleX(0.9459);">ENG</span>
<span class="t" style="left:1262.41px;top:733px;font-size:11.7px;color:#fff;transform:scaleX(0.9607);-webkit-text-stroke:.2px #fff;">01:47</span>
<span class="t" style="left:1291.8px;top:731.4px;font-size:14px;color:#fff;font-family:'DejaVu Sans','Liberation Sans',sans-serif;">م</span>
<span class="t" style="left:1253px;top:752.4px;font-size:9.2px;color:#fff;font-family:'DejaVu Sans','Liberation Sans',sans-serif;transform:scaleX(1.2000);direction:ltr;unicode-bidi:bidi-override;-webkit-text-stroke:.25px #fff;">٢٠٢٥/٠٨/٠٩</span>
<svg class="a" style="left:0;top:0" width="1366" height="768" viewBox="0 0 1366 768"><path d="M15.8 742.4L22.6 741.4V747.6H15.8ZM23.6 741.3L32.4 740V747.6H23.6ZM15.8 748.6H22.6V754.8L15.8 753.8ZM23.6 748.6H32.4V756.2L23.6 754.9Z" stroke="none" fill="#fff" stroke-width="0" />
<circle cx="74.2" cy="746.2" r="7.9" fill="none" stroke="#fff" stroke-width="2" />
<path d="M68.6 752L62.2 758.2" stroke="#fff" stroke-width="2.2" fill="none" stroke-linecap="round"/>
<rect x="112.6" y="744" width="11.4" height="7.4" fill="none" stroke="#fff" stroke-width="1.3" rx="0" />
<path d="M111.6 740.6H124.8M111.6 754.8H124.8M112.6 740.6V742.4M123.8 740.6V742.4M112.6 753V754.8M123.8 753V754.8M127.4 740.2V743M127.4 749.2V755" stroke="#fff" fill="none" stroke-width="1.2" />
<rect x="126.3" y="744.4" width="2.3" height="3" fill="#fff" stroke="none" stroke-width="1" rx="0" />
<defs><linearGradient id="cp1" x1="0" y1="0" x2="0" y2="1"><stop offset="0" stop-color="#2d8fe6"/><stop offset=".45" stop-color="#35b36b"/><stop offset=".75" stop-color="#f4c430"/><stop offset="1" stop-color="#ef5a2a"/></linearGradient><linearGradient id="cp2" x1="0" y1="0" x2="0" y2="1"><stop offset="0" stop-color="#b45bd6"/><stop offset=".5" stop-color="#ee4f9a"/><stop offset="1" stop-color="#f7a24a"/></linearGradient></defs>
<path d="M164 738H173.4Q176.4 738.4 176.8 741.6L173.4 751.8Q172.4 754.2 170 754.2H166.8L164.4 752.2H161.6Q159.4 751.6 160.2 748.6L162 741Q162.6 738.6 164 738Z" stroke="none" fill="url(#cp1)" stroke-width="0" />
<path d="M177.6 743H180.4Q182.8 743.6 182 746.6L179.6 755.4Q178.8 757.8 176.6 757.8H168.6Q166 757.4 166.4 754.4L168.6 752.8L172.4 754.2Q174.4 753.6 175 751.2Z" stroke="none" fill="url(#cp2)" stroke-width="0" />
<path d="M169.6 746L172.6 744.6L171 752L168 753Z" stroke="none" fill="#222633" stroke-width="0" />
<defs><linearGradient id="ed1" x1="0" y1="0" x2="1" y2="1"><stop offset="0" stop-color="#35c1f1"/><stop offset=".6" stop-color="#36c06a"/><stop offset="1" stop-color="#2aa84f"/></linearGradient></defs>
<path d="M208.4 748Q208.6 738.4 219.6 736.2Q231.2 736.6 232 746.4Q231.6 751.8 224.4 752.2Q221.6 751.6 222.8 749.2Q224.4 746.4 221 744.4Q214.6 742.8 208.4 748Z" stroke="none" fill="url(#ed1)" stroke-width="0" />
<path d="M208.4 748Q210.4 742.6 218.6 743Q222.8 743.8 223 746.6Q219 746 217 749.4Q216.4 754 220.6 757.4Q225 759.6 230 756Q226 761 219.6 760.2Q209.4 758.6 208.4 748Z" stroke="none" fill="#1b5fc4" stroke-width="0" />
<circle cx="219.6" cy="747.6" r="2.6" fill="#222633" stroke="none" stroke-width="1" />
<rect x="208.2" y="752.2" width="11.8" height="4.4" fill="#e5891b" stroke="none" stroke-width="1" rx="0" />
<rect x="208.2" y="756.4" width="11.8" height="3.8" fill="#b86a17" stroke="none" stroke-width="1" rx="0" />
<rect x="213" y="755.6" width="2.2" height="1.8" fill="#ffd34d" stroke="none" stroke-width="1" rx="0" />
<path d="M258.4 741.4V739.4H266L267.4 741.4Z" stroke="none" fill="#e8951c" stroke-width="0" />
<rect x="258.2" y="740.8" width="21" height="15.6" fill="#fcd66b" stroke="none" stroke-width="1" rx="0.6" />
<rect x="258.2" y="740.8" width="21" height="1.4" fill="#f4b73c" stroke="none" stroke-width="1" rx="0" />
<rect x="262.4" y="749.4" width="12.6" height="7.2" fill="#4a90d9" stroke="none" stroke-width="1" rx="0" />
<rect x="266" y="752.8" width="5.4" height="3.8" fill="#fcd66b" stroke="none" stroke-width="1" rx="0" />
<circle cx="318.2" cy="748" r="12" fill="#db4437" stroke="none" stroke-width="1" />
<path d="M318.2 748L307.6 742.2A12 12 0 0 0 316.4 759.9Z" stroke="none" fill="#0f9d58" stroke-width="0" />
<path d="M318.2 748L316.4 759.9A12 12 0 0 0 329.8 744.8Z" stroke="none" fill="#ffcd40" stroke-width="0" />
<path d="M318.2 748L312.6 751.4L307.8 742.6A12 12 0 0 1 329.6 744.6L318.2 744.6Z" stroke="none" fill="#db4437" stroke-width="0" />
<circle cx="318.2" cy="748" r="5.7" fill="#fff" stroke="none" stroke-width="1" />
<circle cx="318.2" cy="748" r="4.5" fill="#4285f4" stroke="none" stroke-width="1" />
<path d="M357.6 741.4L367.6 737L379 742.8V757.4Q379 758.6 377.8 758.6H359.6Q357.6 758.6 357.6 756.6Z" stroke="none" fill="#28a8ea" stroke-width="0" />
<path d="M367.6 737L379 742.8V748.4L367.6 743Z" stroke="none" fill="#0f4a9c" stroke-width="0" />
<path d="M367.6 748.6L379 748.4V757.4Q379 758.6 377.8 758.6H364Z" stroke="none" fill="#50d9ff" stroke-width="0" />
<rect x="355" y="741.2" width="13.6" height="13.6" fill="#0f6cbd" stroke="none" stroke-width="1" rx="1" />
<circle cx="361.8" cy="748" r="3.8" fill="none" stroke="#fff" stroke-width="1.7" />
<defs><radialGradient id="ff" cx=".55" cy=".3" r=".8"><stop offset="0" stop-color="#ffe14d"/><stop offset=".45" stop-color="#ff9a2e"/><stop offset=".8" stop-color="#f0362c"/><stop offset="1" stop-color="#e6188e"/></radialGradient></defs>
<path d="M406.6 741.4Q408.6 742.4 409.6 740.4Q411.6 742.4 414.4 742Q416.4 738.4 416.2 736.2Q421 738.4 422.6 742.4Q424.6 739.6 424 742.6Q427.6 746.4 426.8 751Q425 758.8 416.4 759.2Q406.4 758.6 404.8 750.4Q404.4 745 406.6 741.4Z" stroke="none" fill="url(#ff)" stroke-width="0" />
<circle cx="415.6" cy="749.4" r="4.6" fill="#9059d8" stroke="none" stroke-width="1" />
<circle cx="416.6" cy="750.4" r="2.6" fill="#5b6fe0" stroke="none" stroke-width="1" />
<rect x="458.8" y="737" width="17.8" height="20.8" fill="#21a366" stroke="none" stroke-width="1" rx="1" />
<rect x="458.8" y="737" width="17.8" height="5.2" fill="#33c481" stroke="none" stroke-width="1" rx="1" />
<rect x="458.8" y="747.4" width="17.8" height="5.2" fill="#107c41" stroke="none" stroke-width="1" rx="0" />
<rect x="458.8" y="752.6" width="17.8" height="5.2" fill="#185c37" stroke="none" stroke-width="1" rx="1" />
<rect x="453.2" y="742" width="12.4" height="12.4" fill="#107c41" stroke="none" stroke-width="1" rx="1" />
<rect x="508" y="737" width="17.8" height="20.8" fill="#2b7cd3" stroke="none" stroke-width="1" rx="1" />
<rect x="508" y="737" width="17.8" height="5.2" fill="#41a5ee" stroke="none" stroke-width="1" rx="1" />
<rect x="508" y="747.4" width="17.8" height="5.2" fill="#185abd" stroke="none" stroke-width="1" rx="0" />
<rect x="508" y="752.6" width="17.8" height="5.2" fill="#103f91" stroke="none" stroke-width="1" rx="1" />
<rect x="502.3" y="742" width="12.4" height="12.4" fill="#185abd" stroke="none" stroke-width="1" rx="1" />
<path d="M555.2 737.6H566.6L570.4 741.2V758H555.2Z" stroke="none" fill="#f7f7f7" stroke-width="0" />
<path d="M566.6 737.6V741.2H570.4Z" stroke="none" fill="#c9c9c9" stroke-width="0" />
<path d="M750.6 737.6H762L765.8 741.2V758H750.6Z" stroke="none" fill="#f7f7f7" stroke-width="0" />
<path d="M762 737.6V741.2H765.8Z" stroke="none" fill="#c9c9c9" stroke-width="0" />
<rect x="601" y="737" width="22.6" height="22.6" fill="#3f8cf5" stroke="none" stroke-width="1" rx="6.6" />
<rect x="605.6" y="744.6" width="9.6" height="7.6" fill="#fff" stroke="none" stroke-width="1" rx="1.8" />
<path d="M615.8 747.4L619.2 745V752L615.8 749.6Z" stroke="none" fill="#fff" stroke-width="0" />
<circle cx="661" cy="748.4" r="10.7" fill="#fff" stroke="none" stroke-width="1" />
<path d="M656 753.6L659.4 744.4H662.8L666.2 753.6H664L661.1 746.6L658.2 753.6Z" stroke="none" fill="#1f2a44" stroke-width="0" />
<rect x="656.4" y="743.8" width="9.4" height="4.6" fill="#3a7bd5" stroke="none" stroke-width="1" rx="0" />
<path d="M658.8 743.8Q661.1 741.4 663.4 743.8Z" stroke="none" fill="#3ddc84" stroke-width="0" />
<rect x="699" y="736.6" width="14.6" height="14.6" fill="#b9bcc2" stroke="none" stroke-width="1" rx="1.6" />
<path d="M701.6 751.2L704.4 754V751.2Z" stroke="none" fill="#b9bcc2" stroke-width="0" />
<rect x="708.4" y="746" width="14" height="13.8" fill="#4a7bd8" stroke="none" stroke-width="1" rx="1.6" />
<path d="M799 739.2Q799 737 804.8 737Q810.6 737 810.6 739.2V749.8Q810.6 752 804.8 752Q799 752 799 749.8Z" stroke="none" fill="#fdd04f" stroke-width="0" />
<path d="M804.8 737Q810.6 737 810.6 739.2V749.8Q810.6 752 804.8 752Z" stroke="none" fill="#f4b929" stroke-width="0" />
<path d="M799 739.2Q799 741.4 804.8 741.4Q810.6 741.4 810.6 739.2Q810.6 737 804.8 737Q799 737 799 739.2Z" stroke="none" fill="#f6a66a" stroke-width="0" />
<path d="M813.2 737.6H817.6V742.4M797.2 753.2V758H801.6" stroke="#27c24c" fill="none" stroke-width="1.4" />
<path d="M807.6 748.6L815.6 757.4M816.4 748.2L808.4 757.4M806.6 749.6L808.6 747.4M815.4 747.4L817.6 749.6" stroke="#b45bd6" fill="none" stroke-width="1.5" stroke-linecap="round"/>
<path d="M956 750.6L962.6 744.2L966.2 747.6L962.6 754.2L959.4 754.2Z" stroke="none" fill="#157a2c" stroke-width="0" />
<path d="M967.2 741.6H978V752.6L974.6 749.2L968.2 754.2L964.6 750.6L970.8 745.2Z" stroke="none" fill="#3cc21f" stroke-width="0" />
<path d="M1100.6 750.4L1106.2 745L1111.8 750.4" stroke="#fff" fill="none" stroke-width="1.2" stroke-linecap="round" stroke-linejoin="round"/>
<rect x="1125.4" y="744.6" width="7.4" height="6.8" fill="none" stroke="#fff" stroke-width="1.1" rx="1.4" />
<path d="M1132.8 747.2L1135.8 745.6V750.4L1132.8 748.8" stroke="#fff" fill="none" stroke-width="1" stroke-linejoin="round"/>
<path d="M1126 742.2Q1130 739.4 1134 742.2M1126 753.8Q1130 756.6 1134 753.8" stroke="#fff" fill="none" stroke-width="1" stroke-linecap="round"/>
<rect x="1151" y="745" width="10" height="7.4" fill="none" stroke="#fff" stroke-width="1.1" rx="0" />
<rect x="1161" y="747.2" width="1.2" height="3" fill="#fff" stroke="none" stroke-width="1" rx="0" />
<path d="M1152.6 751.2L1154.2 746.2H1159.6V751.2Z" stroke="none" fill="#fff" stroke-width="0" />
<path d="M1147 742.4V744.6M1149.8 742.4V744.6M1146.4 744.8H1150.4V747.2Q1150.4 748.8 1148.4 748.8Q1146.4 748.8 1146.4 747.2ZM1148.4 748.8V752.6H1151" stroke="#fff" fill="none" stroke-width="1" />
<path d="M1173.4 754.6Q1173.6 743.4 1185 743.2M1176.8 754.6Q1177 746.8 1185 746.6M1180 754.6Q1180.2 750 1185 749.8" stroke="#fff" fill="none" stroke-width="1" stroke-linecap="round"/>
<circle cx="1184" cy="753.6" r="1.3" fill="#fff" stroke="none" stroke-width="1" />
<path d="M1194.4 745.8H1196.8L1200.2 742.4V754L1196.8 750.6H1194.4Z" stroke="#fff" fill="none" stroke-width="1" stroke-linejoin="round"/>
<path d="M1202.4 746Q1203.8 748.2 1202.4 750.4M1204.8 744Q1207.4 748.2 1204.8 752.4M1207.4 742Q1211.2 748.2 1207.4 754.4" stroke="#fff" fill="none" stroke-width="1" stroke-linecap="round"/>
<path d="M1325.8 740.8H1340.4V752.6H1335.6L1333.1 755.2L1330.6 752.6H1325.8Z" stroke="#fff" fill="none" stroke-width="1.1" stroke-linejoin="miter"/>
<path d="M1361.5 728.2L1361.5 768" stroke="#4d5059" stroke-width="1" fill="none" /></svg>
</body>
</html>
